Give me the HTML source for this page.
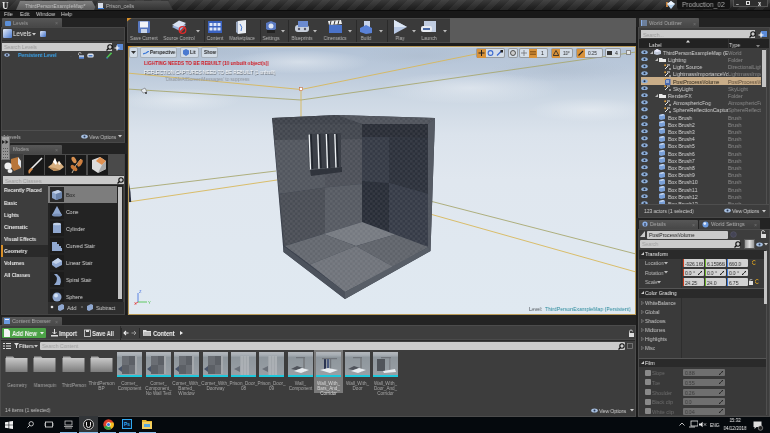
<!DOCTYPE html>
<html><head><meta charset="utf-8">
<style>
*{margin:0;padding:0;box-sizing:border-box}
html,body{width:770px;height:433px;overflow:hidden;background:#1c1c1c;font-family:"Liberation Sans",sans-serif;color:#cfcfcf}
.a{position:absolute}
.t{position:absolute;white-space:nowrap;-webkit-font-smoothing:antialiased;will-change:transform}
</style></head><body>
<div class="a" style="left:0px;top:0px;width:770px;height:10px;background:linear-gradient(#3a3a3a,#262626 60%,#1c1c1c);"></div>
<div class="a" style="left:0px;top:0px;width:770px;height:10px;background:repeating-linear-gradient(135deg,rgba(255,255,255,.05) 0 6px,rgba(0,0,0,0) 6px 12px);"></div>
<div class="t" style="left:2px;top:0.31px;font-size:10.35px;line-height:11.38px;color:#f2f2f2;font-weight:bold;transform:scaleX(0.87);transform-origin:0 50%;font-family:Liberation Serif;">U</div>
<svg class="a" style="left:16px;top:1px;" width="82" height="9" viewBox="0 0 82 9"><defs><linearGradient id="tg1" x1="0" y1="0" x2="0" y2="1"><stop offset="0" stop-color="#808080"/><stop offset="1" stop-color="#5a5a5a"/></linearGradient></defs><polygon points="0,9 4,0 76,0 81,9" fill="url(#tg1)"/></svg>
<div class="t" style="left:25px;top:2.81px;font-size:5.98px;line-height:6.58px;color:#c4c4c4;transform:scaleX(0.87);transform-origin:0 50%;">ThirdPersonExampleMap*</div>
<svg class="a" style="left:94px;top:1px;" width="80" height="9" viewBox="0 0 80 9"><defs><linearGradient id="tg2" x1="0" y1="0" x2="0" y2="1"><stop offset="0" stop-color="#505050"/><stop offset="1" stop-color="#333"/></linearGradient></defs><polygon points="0,9 4,0 74,0 79,9" fill="url(#tg2)"/></svg>
<div class="a" style="left:98px;top:3px;width:5px;height:5px;background:#d8dde8;"></div>
<div class="a" style="left:98px;top:8px;width:6px;height:1px;background:#3c7cd8;"></div>
<div class="t" style="left:106px;top:2.81px;font-size:5.98px;line-height:6.58px;color:#b4b4b4;transform:scaleX(0.87);transform-origin:0 50%;">Prison_cells</div>
<div class="a" style="left:666px;top:2px;width:2px;height:5px;background:#c08040;"></div>
<svg class="a" style="left:667px;top:1px;" width="8" height="8" viewBox="0 0 8 8"><polygon points="4,0 8,3 4,8 0,3" fill="#b8d4f0"/><polygon points="4,0 8,3 4,4 0,3" fill="#f0f6ff"/></svg>
<div class="a" style="left:677px;top:0px;width:53px;height:9px;background:#141414;border-radius:0 0 2px 2px"></div>
<div class="t" style="left:682px;top:1.43px;font-size:7.59px;line-height:8.35px;color:#a8a8a8;transform:scaleX(0.87);transform-origin:0 50%;">Production_02</div>
<div class="a" style="left:733px;top:0px;width:35px;height:7px;background:#2e2e2e;border:1px solid #555;border-top:0"></div>
<div class="t" style="left:736px;top:1.14px;font-size:5.75px;line-height:6.33px;color:#eee;font-weight:bold;transform:scaleX(0.87);transform-origin:0 50%;">–</div>
<div class="a" style="left:746px;top:1px;width:4px;height:4px;background:transparent;border:1px solid #ddd"></div>
<div class="t" style="left:758px;top:0.62px;font-size:6.32px;line-height:6.96px;color:#eee;font-weight:bold;transform:scaleX(0.87);transform-origin:0 50%;">x</div>
<div class="a" style="left:0px;top:10px;width:770px;height:8px;background:#191919;"></div>
<div class="a" style="left:0px;top:10px;width:770px;height:1px;background:#0c0c0c;"></div>
<div class="t" style="left:4px;top:11.38px;font-size:6.21px;line-height:6.83px;color:#d4d4d4;transform:scaleX(0.87);transform-origin:0 50%;">File</div>
<div class="t" style="left:20px;top:11.38px;font-size:6.21px;line-height:6.83px;color:#d4d4d4;transform:scaleX(0.87);transform-origin:0 50%;">Edit</div>
<div class="t" style="left:36px;top:11.38px;font-size:6.21px;line-height:6.83px;color:#d4d4d4;transform:scaleX(0.87);transform-origin:0 50%;">Window</div>
<div class="t" style="left:61px;top:11.38px;font-size:6.21px;line-height:6.83px;color:#d4d4d4;transform:scaleX(0.87);transform-origin:0 50%;">Help</div>
<div class="a" style="left:0px;top:18px;width:127px;height:9px;background:#232323;"></div>
<div class="a" style="left:2px;top:18px;width:60px;height:9px;background:linear-gradient(#575757,#474747);border-radius:1px 1px 0 0"></div>
<div class="a" style="left:5px;top:21px;width:6px;height:5px;background:#5b8fd8;border-radius:1px"></div>
<div class="t" style="left:13px;top:19.51px;font-size:5.98px;line-height:6.58px;color:#9c9c9c;transform:scaleX(0.87);transform-origin:0 50%;">Levels</div>
<div class="t" style="left:55px;top:19.64px;font-size:5.75px;line-height:6.33px;color:#777;transform:scaleX(0.87);transform-origin:0 50%;">×</div>
<div class="a" style="left:1px;top:27px;width:124px;height:116px;background:#3d3d3d;border:1px solid #484848"></div>
<div class="a" style="left:2px;top:28px;width:122px;height:12px;background:#393939;"></div>
<div class="a" style="left:2px;top:40px;width:122px;height:1px;background:#2c2c2c;"></div>
<div class="a" style="left:3px;top:29px;width:9px;height:9px;background:linear-gradient(135deg,#e8eef8,#4a7ad0);border-radius:1px"></div>
<div class="t" style="left:13px;top:30.42px;font-size:7.24px;line-height:7.97px;color:#ececec;transform:scaleX(0.87);transform-origin:0 50%;">Levels</div>
<svg class="a" style="left:32px;top:33px;" width="4" height="3" viewBox="0 0 4 3"><polygon points="0,0 4,0 2,2.5" fill="#ccc"/></svg>
<div class="a" style="left:40px;top:31px;width:6px;height:6px;background:linear-gradient(135deg,#dfe8f8,#3f6fc8);border-radius:1px"></div>
<div class="a" style="left:2px;top:43px;width:110px;height:8px;background:#cbcbcb;"></div>
<div class="t" style="left:4px;top:44.11px;font-size:5.98px;line-height:6.58px;color:#999;transform:scaleX(0.87);transform-origin:0 50%;">Search Levels</div>
<svg class="a" style="left:106px;top:44px;" width="7" height="7" viewBox="0 0 7 7"><circle cx="4" cy="3" r="2.2" stroke="#111" stroke-width="1.1" fill="none"/><line x1="2.5" y1="4.5" x2="0.5" y2="6.5" stroke="#111" stroke-width="1.2"/></svg>
<svg class="a" style="left:114px;top:43px;" width="9" height="8" viewBox="0 0 9 8"><rect x="3" y="1" width="6" height="6" fill="#5a8ad8"/><path d="M0.5 5h5M3 2.5v5" stroke="#fff" stroke-width="1.2"/></svg>
<svg class="a" style="left:4px;top:53px;" width="6" height="4" viewBox="0 0 6 4"><ellipse cx="3" cy="2" rx="2.8" ry="1.7" fill="#9ab6dc"/><circle cx="3" cy="2" r="0.9" fill="#223"/></svg>
<div class="t" style="left:18px;top:52.45px;font-size:6.09px;line-height:6.70px;color:#3ba0e6;font-weight:bold;transform:scaleX(0.87);transform-origin:0 50%;letter-spacing:-0.15px;">Persistent Level</div>
<div class="t" style="left:70px;top:53.14px;font-size:5.75px;line-height:6.33px;color:#666;transform:scaleX(0.87);transform-origin:0 50%;">·</div>
<svg class="a" style="left:77px;top:52px;" width="7" height="7" viewBox="0 0 7 7"><path d="M1.5 3V1.8a1.3 1.3 0 0 1 2.6 0" stroke="#ccc" stroke-width=".8" fill="none"/><rect x="2" y="3.5" width="5" height="3.2" fill="#5a8ad8"/><rect x="2" y="3.5" width="5" height="1.2" fill="#ddd"/></svg>
<svg class="a" style="left:87px;top:53px;" width="7" height="5" viewBox="0 0 7 5"><rect x="0.3" y="0.5" width="6.4" height="4" rx="1.5" fill="#dfe6f0"/><rect x="1.5" y="2" width="4" height="1.5" fill="#4a78c0"/></svg>
<svg class="a" style="left:106px;top:52px;" width="6" height="7" viewBox="0 0 6 7"><line x1="0.8" y1="6" x2="5.5" y2="0.8" stroke="#4fc04f" stroke-width="1.6"/><circle cx="1" cy="6" r=".8" fill="#3a6ad0"/></svg>
<div class="a" style="left:2px;top:130px;width:122px;height:1px;background:#4e4e4e;"></div>
<div class="t" style="left:3px;top:134.01px;font-size:5.98px;line-height:6.58px;color:#bdbdbd;transform:scaleX(0.87);transform-origin:0 50%;">1 levels</div>
<svg class="a" style="left:81px;top:134px;" width="7" height="5" viewBox="0 0 7 5"><ellipse cx="3.5" cy="2.5" rx="3.3" ry="2" fill="#a8c0e0"/><circle cx="3.5" cy="2.5" r="1" fill="#2a3a5a"/></svg>
<div class="t" style="left:89px;top:134.20px;font-size:5.63px;line-height:6.20px;color:#bdbdbd;transform:scaleX(0.87);transform-origin:0 50%;letter-spacing:-0.15px;">View Options</div>
<svg class="a" style="left:118px;top:135px;" width="4" height="3" viewBox="0 0 4 3"><polygon points="0,0 4,0 2,2.5" fill="#ccc"/></svg>
<div class="a" style="left:0px;top:143px;width:127px;height:11px;background:#232323;"></div>
<div class="a" style="left:10px;top:145px;width:52px;height:9px;background:linear-gradient(#575757,#474747);border-radius:1px 1px 0 0"></div>
<div class="t" style="left:13px;top:145.91px;font-size:5.98px;line-height:6.58px;color:#a8a8a8;transform:scaleX(0.87);transform-origin:0 50%;">Modes</div>
<div class="t" style="left:55px;top:147.14px;font-size:5.75px;line-height:6.33px;color:#777;transform:scaleX(0.87);transform-origin:0 50%;">×</div>
<div class="a" style="left:1px;top:154px;width:124px;height:161px;background:#3d3d3d;border:1px solid #454545"></div>
<div class="a" style="left:2px;top:154px;width:122px;height:21px;background:#4a4a4a;"></div>
<div class="a" style="left:2px;top:154px;width:21px;height:21px;background:#3d3d3d;"></div>
<div class="a" style="left:24px;top:155px;width:20px;height:20px;background:#191919;"></div>
<div class="a" style="left:45px;top:155px;width:20px;height:20px;background:#191919;"></div>
<div class="a" style="left:66px;top:155px;width:20px;height:20px;background:#191919;"></div>
<div class="a" style="left:88px;top:155px;width:20px;height:20px;background:#191919;"></div>
<svg class="a" style="left:3px;top:156px;" width="19" height="18" viewBox="0 0 19 18"><polygon points="8,3 15,1 18,5 18,12 11,15 8,11" fill="#b8763a"/><polygon points="15,1 18,5 18,12 15,8" fill="#e0e4ea"/><circle cx="5" cy="10" r="3.6" fill="#f0f0f0"/><ellipse cx="7" cy="15" rx="2.5" ry="2" fill="#eee"/></svg>
<svg class="a" style="left:26px;top:157px;" width="17" height="17" viewBox="0 0 17 17"><line x1="16" y1="1" x2="5" y2="12" stroke="#f0f0f0" stroke-width="1.6"/><path d="M5 11 Q1 13 3 17 Q6 13 7 12Z" fill="#d89050"/></svg>
<svg class="a" style="left:47px;top:157px;" width="18" height="15" viewBox="0 0 18 15"><polygon points="1,10 5,7 8,1 10,6 12,4 17,10 13,13 7,14" fill="#d8b080"/><polygon points="8,1 10,6 9,8 6,5" fill="#fff"/><polygon points="12,4 14,7 12,8 11,6" fill="#f4f0ea"/><polygon points="1,10 7,14 13,13 8,11" fill="#b88a58"/></svg>
<svg class="a" style="left:69px;top:156px;" width="15" height="18" viewBox="0 0 15 18"><path d="M3 17 Q6 9 12 3" stroke="#f0e0c0" stroke-width=".8" fill="none"/><ellipse cx="5" cy="4" rx="2" ry="3.5" fill="#d89050" transform="rotate(-30 5 4)"/><ellipse cx="11" cy="7" rx="2" ry="4" fill="#d08040" transform="rotate(30 11 7)"/><ellipse cx="5" cy="12" rx="2" ry="4" fill="#c87838" transform="rotate(-50 5 12)"/></svg>
<svg class="a" style="left:90px;top:156px;" width="17" height="18" viewBox="0 0 17 18"><polygon points="2,4 10,1 16,5 16,13 8,17 2,13" fill="#dcdcdc"/><polygon points="10,1 16,5 12,9 6,5" fill="#e09050"/><polygon points="8,17 16,13 16,5 12,9" fill="#a8a8a8"/></svg>
<div class="a" style="left:3px;top:176px;width:121px;height:8px;background:#c9c9c9;"></div>
<div class="t" style="left:5px;top:177.71px;font-size:5.98px;line-height:6.58px;color:#9a9a9a;transform:scaleX(0.87);transform-origin:0 50%;">Search Classes</div>
<svg class="a" style="left:117px;top:177px;" width="7" height="7" viewBox="0 0 7 7"><circle cx="4" cy="3" r="2.2" stroke="#111" stroke-width="1.1" fill="none"/><line x1="2.5" y1="4.5" x2="0.5" y2="6.5" stroke="#111" stroke-width="1.2"/></svg>
<div class="a" style="left:2px;top:185px;width:46px;height:129px;background:#3d3d3d;"></div>
<div class="a" style="left:2px;top:245px;width:46px;height:12px;background:#2a2a2a;"></div>
<div class="a" style="left:1px;top:245px;width:1.5px;height:12px;background:#d8902a;"></div>
<div class="t" style="left:4px;top:187.37px;font-size:5.86px;line-height:6.45px;color:#e6e6e6;font-weight:bold;transform:scaleX(0.87);transform-origin:0 50%;letter-spacing:-0.1px;">Recently Placed</div>
<div class="t" style="left:4px;top:199.57px;font-size:5.86px;line-height:6.45px;color:#e6e6e6;font-weight:bold;transform:scaleX(0.87);transform-origin:0 50%;letter-spacing:-0.1px;">Basic</div>
<div class="t" style="left:4px;top:211.57px;font-size:5.86px;line-height:6.45px;color:#e6e6e6;font-weight:bold;transform:scaleX(0.87);transform-origin:0 50%;letter-spacing:-0.1px;">Lights</div>
<div class="t" style="left:4px;top:223.57px;font-size:5.86px;line-height:6.45px;color:#e6e6e6;font-weight:bold;transform:scaleX(0.87);transform-origin:0 50%;letter-spacing:-0.1px;">Cinematic</div>
<div class="t" style="left:4px;top:235.57px;font-size:5.86px;line-height:6.45px;color:#e6e6e6;font-weight:bold;transform:scaleX(0.87);transform-origin:0 50%;letter-spacing:-0.1px;">Visual Effects</div>
<div class="t" style="left:4px;top:247.77px;font-size:5.86px;line-height:6.45px;color:#e6e6e6;font-weight:bold;transform:scaleX(0.87);transform-origin:0 50%;letter-spacing:-0.1px;">Geometry</div>
<div class="t" style="left:4px;top:259.77px;font-size:5.86px;line-height:6.45px;color:#e6e6e6;font-weight:bold;transform:scaleX(0.87);transform-origin:0 50%;letter-spacing:-0.1px;">Volumes</div>
<div class="t" style="left:4px;top:271.77px;font-size:5.86px;line-height:6.45px;color:#e6e6e6;font-weight:bold;transform:scaleX(0.87);transform-origin:0 50%;letter-spacing:-0.1px;">All Classes</div>
<div class="a" style="left:48px;top:185px;width:75px;height:118px;background:#232323;"></div>
<div class="a" style="left:48px;top:186px;width:69px;height:17px;background:#7d7d7d;"></div>
<div class="a" style="left:50px;top:187px;width:14px;height:15px;background:#2a2a2a;"></div>
<div class="t" style="left:66px;top:192.01px;font-size:5.98px;line-height:6.58px;color:#222;transform:scaleX(0.87);transform-origin:0 50%;">Box</div>
<div class="a" style="left:50px;top:204px;width:14px;height:15px;background:#1c1c1c;"></div>
<div class="t" style="left:66px;top:209.01px;font-size:5.98px;line-height:6.58px;color:#d8d8d8;transform:scaleX(0.87);transform-origin:0 50%;">Cone</div>
<div class="a" style="left:50px;top:221px;width:14px;height:15px;background:#1c1c1c;"></div>
<div class="t" style="left:66px;top:226.01px;font-size:5.98px;line-height:6.58px;color:#d8d8d8;transform:scaleX(0.87);transform-origin:0 50%;">Cylinder</div>
<div class="a" style="left:50px;top:238px;width:14px;height:15px;background:#1c1c1c;"></div>
<div class="t" style="left:66px;top:243.01px;font-size:5.98px;line-height:6.58px;color:#d8d8d8;transform:scaleX(0.87);transform-origin:0 50%;">Curved Stair</div>
<div class="a" style="left:50px;top:255px;width:14px;height:15px;background:#1c1c1c;"></div>
<div class="t" style="left:66px;top:260.01px;font-size:5.98px;line-height:6.58px;color:#d8d8d8;transform:scaleX(0.87);transform-origin:0 50%;">Linear Stair</div>
<div class="a" style="left:50px;top:272px;width:14px;height:15px;background:#1c1c1c;"></div>
<div class="t" style="left:66px;top:277.01px;font-size:5.98px;line-height:6.58px;color:#d8d8d8;transform:scaleX(0.87);transform-origin:0 50%;">Spiral Stair</div>
<div class="a" style="left:50px;top:289px;width:14px;height:15px;background:#1c1c1c;"></div>
<div class="t" style="left:66px;top:294.01px;font-size:5.98px;line-height:6.58px;color:#d8d8d8;transform:scaleX(0.87);transform-origin:0 50%;">Sphere</div>
<svg class="a" style="left:51px;top:188px;" width="12" height="12" viewBox="0 0 12 12"><polygon points="1,4 7,2 11,4 11,10 5,12 1,10" fill="#8aa2c8"/><polygon points="7,2 11,4 5,6 1,4" fill="#c0d0e8"/><polygon points="5,6 11,4 11,10 5,12" fill="#6a82a8"/></svg>
<svg class="a" style="left:51px;top:205px;" width="12" height="12" viewBox="0 0 12 12"><polygon points="6,1 11,10 1,10" fill="#90a8d0"/><ellipse cx="6" cy="10" rx="5" ry="1.5" fill="#7890b8"/></svg>
<svg class="a" style="left:51px;top:222px;" width="12" height="12" viewBox="0 0 12 12"><rect x="2" y="2" width="8" height="9" fill="#90a8d0"/><ellipse cx="6" cy="2" rx="4" ry="1.3" fill="#c0d0e8"/></svg>
<svg class="a" style="left:51px;top:239px;" width="12" height="12" viewBox="0 0 12 12"><path d="M1 3h5v2h2v2h2v2h1v3H1z" fill="#90a8d0"/></svg>
<svg class="a" style="left:51px;top:256px;" width="12" height="12" viewBox="0 0 12 12"><path d="M1 6l6-4 4 3v4l-6 3-4-3z" fill="#90a8d0"/><path d="M1 6l6-4 4 3-6 3z" fill="#c0d0e8"/></svg>
<svg class="a" style="left:51px;top:273px;" width="12" height="12" viewBox="0 0 12 12"><path d="M3 1q6 5 0 11h6q3-6-3-11z" fill="#90a8d0"/></svg>
<svg class="a" style="left:51px;top:290px;" width="12" height="12" viewBox="0 0 12 12"><circle cx="6" cy="7" r="4.5" fill="#90a8d0"/><circle cx="5" cy="5.5" r="2" fill="#d0e0f4"/></svg>
<div class="a" style="left:118px;top:186px;width:4px;height:113px;background:#2a2a2a;"></div>
<div class="a" style="left:118px;top:187px;width:4px;height:112px;background:#c4c4c4;"></div>
<div class="a" style="left:48px;top:302px;width:76px;height:12px;background:#2e2e2e;"></div>
<svg class="a" style="left:50px;top:305px;" width="4" height="4" viewBox="0 0 4 4"><circle cx="2" cy="2" r="1.3" fill="#ddd"/></svg>
<svg class="a" style="left:57px;top:303px;" width="8" height="8" viewBox="0 0 8 8"><polygon points="1,3 5,1 7,2 7,6 3,8 1,7" fill="#90a8d0"/></svg>
<div class="t" style="left:67px;top:305.21px;font-size:5.98px;line-height:6.58px;color:#cfcfcf;transform:scaleX(0.87);transform-origin:0 50%;">Add</div>
<svg class="a" style="left:80px;top:305px;" width="4" height="4" viewBox="0 0 4 4"><circle cx="2" cy="2" r="1.1" fill="#666"/></svg>
<svg class="a" style="left:86px;top:303px;" width="8" height="8" viewBox="0 0 8 8"><polygon points="1,3 5,1 7,2 7,6 3,8 1,7" fill="#90a8d0"/></svg>
<div class="t" style="left:96px;top:305.21px;font-size:5.98px;line-height:6.58px;color:#cfcfcf;transform:scaleX(0.87);transform-origin:0 50%;">Subtract</div>
<div class="a" style="left:1px;top:136px;width:9px;height:24px;background:rgba(175,175,175,.8);border:1px solid rgba(90,90,90,.6)"></div>
<svg class="a" style="left:2px;top:140px;" width="7" height="4" viewBox="0 0 7 4"><polygon points="0,0 3,2 0,4" fill="#222"/><polygon points="3.5,0 6.5,2 3.5,4" fill="#222"/></svg>
<div class="a" style="left:3px;top:148px;width:1px;height:1px;background:rgba(60,60,60,.7);"></div>
<div class="a" style="left:5px;top:148px;width:1px;height:1px;background:rgba(60,60,60,.7);"></div>
<div class="a" style="left:7px;top:148px;width:1px;height:1px;background:rgba(60,60,60,.7);"></div>
<div class="a" style="left:3px;top:151px;width:1px;height:1px;background:rgba(60,60,60,.7);"></div>
<div class="a" style="left:5px;top:151px;width:1px;height:1px;background:rgba(60,60,60,.7);"></div>
<div class="a" style="left:7px;top:151px;width:1px;height:1px;background:rgba(60,60,60,.7);"></div>
<div class="a" style="left:3px;top:154px;width:1px;height:1px;background:rgba(60,60,60,.7);"></div>
<div class="a" style="left:5px;top:154px;width:1px;height:1px;background:rgba(60,60,60,.7);"></div>
<div class="a" style="left:7px;top:154px;width:1px;height:1px;background:rgba(60,60,60,.7);"></div>
<div class="a" style="left:3px;top:157px;width:1px;height:1px;background:rgba(60,60,60,.7);"></div>
<div class="a" style="left:5px;top:157px;width:1px;height:1px;background:rgba(60,60,60,.7);"></div>
<div class="a" style="left:7px;top:157px;width:1px;height:1px;background:rgba(60,60,60,.7);"></div>
<div class="a" style="left:126px;top:18px;width:512px;height:9px;background:#232323;"></div>
<div class="a" style="left:127px;top:18px;width:509px;height:25px;background:#5b5b5b;"></div>
<div class="a" style="left:127px;top:18px;width:323px;height:25px;background:#3a3a3a;border:1px solid #4a4a4a;border-right:0"></div>
<svg class="a" style="left:127px;top:18px;" width="5" height="4" viewBox="0 0 5 4"><polygon points="0,0 4.5,0 0,3.5" fill="#d8902a"/></svg>
<svg class="a" style="left:136px;top:20px;" width="16" height="14" viewBox="0 0 16 14"><rect x="2" y="1" width="12" height="12" rx="1" fill="#5878c0"/><rect x="4" y="1.5" width="8" height="6" fill="#f2f4f8"/><rect x="5" y="9" width="6" height="4" fill="#c8d4e8"/></svg>
<div class="t" style="left:84px;width:120px;text-align:center;top:36.13px;font-size:5.40px;line-height:5.95px;color:#b8b8b8;transform:scaleX(0.87);transform-origin:50% 50%;">Save Current</div>
<svg class="a" style="left:171px;top:20px;" width="16" height="14" viewBox="0 0 16 14"><polygon points="1,7 8,2 15,5 9,11" fill="#9ab2dc"/><polygon points="1,5 8,0.5 15,3 9,8" fill="#d8e2f2"/><circle cx="11.5" cy="10" r="3.3" fill="none" stroke="#e02a2a" stroke-width="1.3"/><line x1="9.3" y1="12.2" x2="13.7" y2="7.8" stroke="#e02a2a" stroke-width="1.3"/></svg>
<div class="t" style="left:119px;width:120px;text-align:center;top:36.13px;font-size:5.40px;line-height:5.95px;color:#b8b8b8;transform:scaleX(0.87);transform-origin:50% 50%;">Source Control</div>
<svg class="a" style="left:196px;top:30px;" width="4" height="3" viewBox="0 0 4 3"><polygon points="0,0 4,0 2,2.5" fill="#bbb"/></svg>
<div class="a" style="left:204px;top:20px;width:1px;height:22px;background:#2a2a2a;"></div>
<svg class="a" style="left:207px;top:20px;" width="16" height="14" viewBox="0 0 16 14"><rect x="1" y="1" width="14" height="12" fill="#3a62c0"/><g fill="#dfe8f8"><rect x="2.5" y="3" width="3" height="3"/><rect x="6.5" y="3" width="3" height="3"/><rect x="10.5" y="3" width="3" height="3"/><rect x="2.5" y="7.5" width="3" height="3"/><rect x="6.5" y="7.5" width="3" height="3"/><rect x="10.5" y="7.5" width="3" height="3"/></g></svg>
<div class="t" style="left:155px;width:120px;text-align:center;top:36.13px;font-size:5.40px;line-height:5.95px;color:#b8b8b8;transform:scaleX(0.87);transform-origin:50% 50%;">Content</div>
<svg class="a" style="left:234px;top:20px;" width="16" height="14" viewBox="0 0 16 14"><polygon points="4,1 12,0 12,13 4,14" fill="#e8ecf2"/><polygon points="2,2 4,1 4,14 2,12" fill="#9aa8c0"/><path d="M6 4q3 3 1 7" stroke="#4a7ad0" stroke-width="1" fill="none"/></svg>
<div class="t" style="left:182px;width:120px;text-align:center;top:36.13px;font-size:5.40px;line-height:5.95px;color:#b8b8b8;transform:scaleX(0.87);transform-origin:50% 50%;">Marketplace</div>
<div class="a" style="left:260px;top:20px;width:1px;height:22px;background:#2a2a2a;"></div>
<svg class="a" style="left:263px;top:20px;" width="16" height="14" viewBox="0 0 16 14"><polygon points="3,3 8,1 13,3 13,9 8,12 3,9" fill="#5878c0"/><circle cx="8" cy="6" r="2.5" fill="#dfe6f2"/><rect x="4" y="10" width="8" height="3" fill="#222"/></svg>
<div class="t" style="left:211px;width:120px;text-align:center;top:36.13px;font-size:5.40px;line-height:5.95px;color:#b8b8b8;transform:scaleX(0.87);transform-origin:50% 50%;">Settings</div>
<svg class="a" style="left:281px;top:30px;" width="4" height="3" viewBox="0 0 4 3"><polygon points="0,0 4,0 2,2.5" fill="#bbb"/></svg>
<div class="a" style="left:288px;top:20px;width:1px;height:22px;background:#2a2a2a;"></div>
<svg class="a" style="left:294px;top:20px;" width="16" height="14" viewBox="0 0 16 14"><rect x="1" y="5" width="14" height="7" rx="3" fill="#c8d0dc"/><rect x="4" y="1" width="10" height="6" fill="#6a8ad0"/><circle cx="5" cy="9" r="1.2" fill="#556"/><circle cx="11" cy="9" r="1.2" fill="#556"/></svg>
<div class="t" style="left:242px;width:120px;text-align:center;top:36.13px;font-size:5.40px;line-height:5.95px;color:#b8b8b8;transform:scaleX(0.87);transform-origin:50% 50%;">Blueprints</div>
<svg class="a" style="left:313px;top:30px;" width="4" height="3" viewBox="0 0 4 3"><polygon points="0,0 4,0 2,2.5" fill="#bbb"/></svg>
<svg class="a" style="left:327px;top:20px;" width="16" height="14" viewBox="0 0 16 14"><rect x="2" y="5" width="13" height="8" fill="#4a72c8"/><polygon points="1,1 14,0 15,4 2,5" fill="#f0f0f0"/><path d="M4 1l-1 4M8 .7l-1 4M12 .3l-1 4" stroke="#333" stroke-width="1"/></svg>
<div class="t" style="left:275px;width:120px;text-align:center;top:36.13px;font-size:5.40px;line-height:5.95px;color:#b8b8b8;transform:scaleX(0.87);transform-origin:50% 50%;">Cinematics</div>
<svg class="a" style="left:348px;top:30px;" width="4" height="3" viewBox="0 0 4 3"><polygon points="0,0 4,0 2,2.5" fill="#bbb"/></svg>
<div class="a" style="left:356px;top:20px;width:1px;height:22px;background:#2a2a2a;"></div>
<svg class="a" style="left:358px;top:20px;" width="16" height="14" viewBox="0 0 16 14"><rect x="6" y="1" width="6" height="8" fill="#c8d4ec"/><polygon points="2,8 8,5 14,8 14,13 8,14 2,12" fill="#5a82d8"/></svg>
<div class="t" style="left:306px;width:120px;text-align:center;top:36.13px;font-size:5.40px;line-height:5.95px;color:#b8b8b8;transform:scaleX(0.87);transform-origin:50% 50%;">Build</div>
<svg class="a" style="left:379px;top:30px;" width="4" height="3" viewBox="0 0 4 3"><polygon points="0,0 4,0 2,2.5" fill="#bbb"/></svg>
<div class="a" style="left:387px;top:20px;width:1px;height:22px;background:#2a2a2a;"></div>
<svg class="a" style="left:392px;top:20px;" width="16" height="14" viewBox="0 0 16 14"><polygon points="2,0 15,7 2,14" fill="#b8c8e4"/><polygon points="2,0 15,7 2,7" fill="#dce6f4"/></svg>
<div class="t" style="left:340px;width:120px;text-align:center;top:36.13px;font-size:5.40px;line-height:5.95px;color:#b8b8b8;transform:scaleX(0.87);transform-origin:50% 50%;">Play</div>
<svg class="a" style="left:412px;top:30px;" width="4" height="3" viewBox="0 0 4 3"><polygon points="0,0 4,0 2,2.5" fill="#bbb"/></svg>
<svg class="a" style="left:421px;top:20px;" width="16" height="14" viewBox="0 0 16 14"><rect x="3" y="1" width="12" height="11" fill="#c0cce0"/><rect x="0" y="6" width="11" height="6" rx="2" fill="#e8ecf2"/><rect x="2" y="8" width="7" height="2" fill="#4a6aa8"/></svg>
<div class="t" style="left:369px;width:120px;text-align:center;top:36.13px;font-size:5.40px;line-height:5.95px;color:#b8b8b8;transform:scaleX(0.87);transform-origin:50% 50%;">Launch</div>
<svg class="a" style="left:443px;top:30px;" width="4" height="3" viewBox="0 0 4 3"><polygon points="0,0 4,0 2,2.5" fill="#bbb"/></svg>
<svg class="a" style="left:127px;top:46px" width="509" height="269" viewBox="127 46 509 269">
<defs>
<linearGradient id="sky" x1="0" y1="46" x2="0" y2="315" gradientUnits="userSpaceOnUse"><stop offset="0" stop-color="#b2c2d6"/><stop offset="0.1" stop-color="#bccadb"/><stop offset="0.2" stop-color="#cdd8e4"/><stop offset="0.33" stop-color="#dbe3ec"/><stop offset="0.5" stop-color="#e0e7ef"/><stop offset="1" stop-color="#e0e9f1"/></linearGradient>
<pattern id="chk" width="5" height="5" patternUnits="userSpaceOnUse"><rect width="2.5" height="2.5" fill="#fff" opacity=".06"/><rect x="2.5" y="2.5" width="2.5" height="2.5" fill="#fff" opacity=".06"/></pattern>
<radialGradient id="cl1" cx=".5" cy=".5" r=".5"><stop offset="0" stop-color="#eef2f6" stop-opacity=".55"/><stop offset="1" stop-color="#eef2f6" stop-opacity="0"/></radialGradient>
<radialGradient id="cl2" cx=".5" cy=".5" r=".5"><stop offset="0" stop-color="#a8b6c6" stop-opacity=".35"/><stop offset="1" stop-color="#a8b6c6" stop-opacity="0"/></radialGradient>
</defs>
<rect x="127" y="46" width="509" height="269" fill="url(#sky)"/>
<ellipse cx="200" cy="52" rx="70" ry="9" fill="url(#cl2)"/>
<ellipse cx="420" cy="56" rx="60" ry="10" fill="url(#cl2)"/>
<ellipse cx="560" cy="70" rx="70" ry="12" fill="url(#cl2)"/>
<ellipse cx="300" cy="62" rx="70" ry="12" fill="url(#cl1)"/>
<ellipse cx="470" cy="88" rx="90" ry="16" fill="url(#cl1)"/>
<ellipse cx="180" cy="100" rx="60" ry="12" fill="url(#cl1)"/>
<ellipse cx="590" cy="110" rx="60" ry="12" fill="url(#cl1)"/>
<g fill="none" stroke-width="0.9">
<polyline points="127,73 301,89.5 476,54" stroke="#d8b85a"/>
<polyline points="127,89 301,100 636,52" stroke="#a8a870"/>
<line x1="301" y1="89" x2="301" y2="117" stroke="#d8b85a"/>
<line x1="128" y1="189" x2="276" y2="171" stroke="#a8a870"/>
<line x1="128" y1="202" x2="277" y2="180" stroke="#d8b85a"/>
<line x1="430" y1="201" x2="636" y2="254" stroke="#a8a870"/>
<line x1="430" y1="214" x2="636" y2="272" stroke="#d8b85a"/>
</g>
<rect x="299.5" y="87.5" width="3" height="3" fill="#fff" stroke="#c86a3a" stroke-width=".6"/>
<polygon points="272,118 337,115 435,118 430.5,251 345,299 283.5,252" fill="#3a404c"/>
<polygon points="273,124 325,124 325,187.5 279,194" fill="#52565e"/>
<polygon points="325,124 362,124 362,184 325,187.5" fill="#4c5058"/>
<polygon points="279,194 325,187.5 325,233.5 284,246" fill="#494d55"/>
<polygon points="325,187.5 362,184 362,222 325,233.5" fill="#565a62"/>
<polygon points="273,124 362,124 362,139 274.4,140" fill="#42464e"/>
<polygon points="362,124 428,124 428,138 362,137" fill="#292d36"/>
<polygon points="362,137 389,137.5 389,183 362,181" fill="#353a45"/>
<polygon points="389,137.5 428,138 428,194 389,183" fill="#2c313b"/>
<polygon points="362,181 389,183 389,232 362,222" fill="#282d37"/>
<polygon points="389,183 428,194 428,247 389,232" fill="#363b47"/>
<polygon points="273,124 362,124 362,222 285,246" fill="url(#chk)"/>
<polygon points="362,124 428,124 428,247 362,222" fill="url(#chk)"/>
<polygon points="272,118 337,115 362,124 273,124" fill="#3e424a"/>
<polygon points="337,115 435,118 428,124 362,124" fill="#4f535b"/>
<polygon points="272,118 337,115 435,118 428,124 362,124 273,124" fill="url(#chk)"/>
<polygon points="428,124 435,118 430.5,251 428,247" fill="#565b64"/>
<polygon points="362,222 395,234.5 356,246 323.5,234" fill="#767a81"/>
<polygon points="323.5,234 356,246 310,264.5 285,246" fill="#63676e"/>
<polygon points="395,234.5 428.5,247 393.5,267 356,246" fill="#5f636a"/>
<polygon points="356,246 393.5,267 345,292 310,264.5" fill="#6f737a"/>
<polygon points="285,246 362,222 428.5,247 345,292" fill="url(#chk)"/>
<polygon points="283.5,246 345,292 345,299 283.5,252" fill="#4c525c"/>
<polygon points="345,292 428.5,247 430.5,251 345,299" fill="#585e67"/>
<polygon points="308,134 341,133 341,167 309,169" fill="#3c4048"/>
<g stroke="#22262e" stroke-width="1.6">
<line x1="311" y1="134" x2="312.5" y2="169"/><line x1="319.5" y1="134" x2="321" y2="168"/><line x1="328" y1="134" x2="329.5" y2="168"/><line x1="336.5" y1="134" x2="338" y2="167"/>
</g>
<g stroke="#f0f3f6" stroke-width="1.3">
<line x1="309.2" y1="134.5" x2="310.5" y2="169.5"/><line x1="317.8" y1="134.2" x2="319" y2="168.8"/><line x1="326.3" y1="134" x2="327.5" y2="168.4"/><line x1="334.8" y1="134" x2="336" y2="168"/>
</g>
<polygon points="310,170 342,167 342,172 311,176" fill="#30343c"/>
<polygon points="128.5,180 130.5,192 131.2,202 128.5,202" fill="#2c3242"/>
<g transform="translate(144,91)"><polygon points="-3,-1 1,-3 3,1 -1,2" fill="#e8ecf0" stroke="#555" stroke-width=".5"/><circle cx="2" cy="2" r="1" fill="#333"/></g>
<line x1="138" y1="302" x2="138" y2="293" stroke="#3a6ae0" stroke-width=".8"/>
<line x1="138" y1="302" x2="147" y2="302" stroke="#40c040" stroke-width=".8"/>
<line x1="138" y1="302" x2="135" y2="304" stroke="#e03030" stroke-width=".8"/>
</svg>
<div class="a" style="left:127px;top:46px;width:1px;height:269px;background:#2a2a2a;"></div>
<div class="a" style="left:128px;top:46px;width:508px;height:269px;background:transparent;border:1px solid #b89a58"></div>
<svg class="a" style="left:128px;top:46px;" width="5" height="4" viewBox="0 0 5 4"><polygon points="0,0 4,0 0,3.5" fill="#d8902a"/></svg>
<div class="a" style="left:129px;top:47px;width:506px;height:1px;background:rgba(255,255,255,.25);"></div>
<div class="t" style="left:139px;top:289.52px;font-size:4.14px;line-height:4.55px;color:#3a6ae0;transform:scaleX(0.87);transform-origin:0 50%;">Z</div>
<div class="t" style="left:148px;top:300.52px;font-size:4.14px;line-height:4.55px;color:#40c040;transform:scaleX(0.87);transform-origin:0 50%;">Y</div>
<div class="t" style="left:134px;top:302.15px;font-size:3.91px;line-height:4.30px;color:#e03030;transform:scaleX(0.87);transform-origin:0 50%;">X</div>
<div class="a" style="left:129px;top:47px;width:9px;height:11px;background:rgba(220,228,236,.75);border:1px solid rgba(120,130,140,.5);border-radius:2px;"></div>
<svg class="a" style="left:131px;top:51px;" width="5" height="4" viewBox="0 0 5 4"><polygon points="0,0 5,0 2.5,3" fill="#333"/></svg>
<div class="a" style="left:140px;top:47px;width:37px;height:11px;background:rgba(220,228,236,.75);border:1px solid rgba(120,130,140,.5);border-radius:2px;"></div>
<svg class="a" style="left:143px;top:51px;" width="6" height="4" viewBox="0 0 6 4"><path d="M0 3L3 2 6 0" stroke="#3a78d8" stroke-width="1.3" fill="none"/></svg>
<div class="t" style="left:149.5px;top:50.25px;font-size:5.17px;line-height:5.69px;color:#222;font-weight:bold;transform:scaleX(0.87);transform-origin:0 50%;">Perspective</div>
<div class="a" style="left:180px;top:47px;width:19px;height:11px;background:rgba(220,228,236,.75);border:1px solid rgba(120,130,140,.5);border-radius:2px;"></div>
<svg class="a" style="left:183px;top:49px;" width="6" height="7" viewBox="0 0 6 7"><polygon points="3,0 6,1.5 6,5 3,7 0,5 0,1.5" fill="#4a7ad0"/></svg>
<div class="t" style="left:190px;top:50.19px;font-size:5.29px;line-height:5.82px;color:#222;font-weight:bold;transform:scaleX(0.87);transform-origin:0 50%;">Lit</div>
<div class="a" style="left:201px;top:47px;width:17px;height:11px;background:rgba(220,228,236,.75);border:1px solid rgba(120,130,140,.5);border-radius:2px;"></div>
<div class="t" style="left:203.5px;top:50.25px;font-size:5.17px;line-height:5.69px;color:#222;font-weight:bold;transform:scaleX(0.87);transform-origin:0 50%;">Show</div>
<div class="t" style="left:144px;top:61.31px;font-size:5.43px;line-height:5.97px;color:#d01a22;font-weight:bold;transform:scaleX(0.87);transform-origin:0 50%;">LIGHTING NEEDS TO BE REBUILT (10 unbuilt object(s))</div>
<div class="t" style="left:144px;top:69.08px;font-size:5.50px;line-height:6.05px;color:#f8f8f8;transform:scaleX(0.87);transform-origin:0 50%;text-shadow:0.5px 0.5px 0 rgba(20,20,20,.55);">REFLECTION CAPTURES NEED TO BE REBUILT (1 unbuilt)</div>
<div class="t" style="left:165px;top:77.13px;font-size:5.40px;line-height:5.95px;color:#8e949c;transform:scaleX(0.87);transform-origin:0 50%;">'DisableAllScreenMessages' to suppress</div>
<div class="t" style="left:528.5px;top:306.04px;font-size:5.75px;line-height:6.33px;color:#4e545a;transform:scaleX(0.87);transform-origin:0 50%;">Level:</div>
<div class="t" style="left:545px;top:305.94px;font-size:5.93px;line-height:6.53px;color:#2a8a9c;transform:scaleX(0.87);transform-origin:0 50%;">ThirdPersonExampleMap (Persistent)</div>
<div class="a" style="left:476px;top:47.5px;width:29px;height:10.5px;background:rgba(220,228,236,.8);border:1px solid rgba(110,110,110,.6);border-radius:2px"></div>
<div class="a" style="left:477px;top:48.5px;width:9px;height:9px;background:#d8923a;"></div>
<svg class="a" style="left:478px;top:50px;" width="7" height="6" viewBox="0 0 7 6"><path d="M3.5 0v6M0.5 3h6" stroke="#222" stroke-width="1"/></svg>
<svg class="a" style="left:487px;top:50px;" width="7" height="6" viewBox="0 0 7 6"><circle cx="3.5" cy="3" r="2.4" stroke="#3a6ad0" stroke-width="1.1" fill="none"/></svg>
<svg class="a" style="left:496px;top:50px;" width="7" height="6" viewBox="0 0 7 6"><path d="M1 5.5L6 .5" stroke="#3a6ad0" stroke-width="1.2"/><rect x="4.5" y="0" width="2.5" height="2.5" fill="#222"/></svg>
<div class="a" style="left:508px;top:47.5px;width:10px;height:10.5px;background:rgba(220,228,236,.8);border:1px solid rgba(110,110,110,.6);border-radius:2px"></div>
<svg class="a" style="left:510px;top:50px;" width="6" height="6" viewBox="0 0 6 6"><circle cx="3" cy="3" r="2.5" stroke="#333" stroke-width=".8" fill="#ccc"/></svg>
<div class="a" style="left:519px;top:47.5px;width:29px;height:10.5px;background:rgba(220,228,236,.8);border:1px solid rgba(110,110,110,.6);border-radius:2px"></div>
<svg class="a" style="left:521px;top:50px;" width="6" height="6" viewBox="0 0 6 6"><path d="M0 3h6M3 0v6" stroke="#666" stroke-width=".7"/></svg>
<div class="a" style="left:529px;top:48.5px;width:8px;height:9px;background:#d8923a;"></div>
<svg class="a" style="left:530px;top:50px;" width="6" height="6" viewBox="0 0 6 6"><g stroke="#6a3a0a" stroke-width=".6"><path d="M0 1.5h6M0 3h6M0 4.5h6"/></g></svg>
<div class="t" style="left:541px;top:50.95px;font-size:5.17px;line-height:5.69px;color:#222;transform:scaleX(0.87);transform-origin:0 50%;">1</div>
<div class="a" style="left:551px;top:47.5px;width:22px;height:10.5px;background:rgba(220,228,236,.8);border:1px solid rgba(110,110,110,.6);border-radius:2px"></div>
<div class="a" style="left:552px;top:48.5px;width:8px;height:9px;background:#d8923a;"></div>
<svg class="a" style="left:553px;top:50px;" width="6" height="6" viewBox="0 0 6 6"><polygon points="3,0.5 5.8,5.5 0.2,5.5" fill="none" stroke="#222" stroke-width=".8"/></svg>
<div class="t" style="left:563px;top:50.95px;font-size:5.17px;line-height:5.69px;color:#222;transform:scaleX(0.87);transform-origin:0 50%;">10°</div>
<div class="a" style="left:576px;top:47.5px;width:27px;height:10.5px;background:rgba(220,228,236,.8);border:1px solid rgba(110,110,110,.6);border-radius:2px"></div>
<div class="a" style="left:577px;top:48.5px;width:8px;height:9px;background:#d8923a;"></div>
<svg class="a" style="left:578px;top:50px;" width="6" height="6" viewBox="0 0 6 6"><path d="M.5 5.5L5 1" stroke="#222" stroke-width="1.1"/></svg>
<div class="t" style="left:588px;top:50.95px;font-size:5.17px;line-height:5.69px;color:#222;transform:scaleX(0.87);transform-origin:0 50%;">0.25</div>
<div class="a" style="left:605px;top:47.5px;width:16px;height:10.5px;background:rgba(220,228,236,.8);border:1px solid rgba(110,110,110,.6);border-radius:2px"></div>
<svg class="a" style="left:607px;top:50px;" width="6" height="5" viewBox="0 0 6 5"><rect x="0" y="1" width="5" height="4" fill="#333"/></svg>
<div class="t" style="left:615px;top:50.95px;font-size:5.17px;line-height:5.69px;color:#222;transform:scaleX(0.87);transform-origin:0 50%;">4</div>
<div class="a" style="left:626px;top:50px;width:5px;height:5px;background:rgba(240,240,240,.8);border:1px solid #888"></div>
<div class="a" style="left:636px;top:18px;width:134px;height:9px;background:#232323;"></div>
<div class="a" style="left:639px;top:18px;width:60px;height:9px;background:linear-gradient(#575757,#474747);border-radius:1px 1px 0 0"></div>
<svg class="a" style="left:641px;top:20px;" width="6" height="6" viewBox="0 0 6 6"><g fill="#8ab0e8"><rect x="0" y="0" width="1.5" height="6"/><rect x="2" y="0.5" width="4" height="1"/><rect x="2" y="2.5" width="4" height="1"/><rect x="2" y="4.5" width="4" height="1"/></g></svg>
<div class="t" style="left:649px;top:19.51px;font-size:5.98px;line-height:6.58px;color:#a8a8a8;transform:scaleX(0.87);transform-origin:0 50%;">World Outliner</div>
<div class="t" style="left:693px;top:20.64px;font-size:5.75px;line-height:6.33px;color:#777;transform:scaleX(0.87);transform-origin:0 50%;">×</div>
<div class="a" style="left:638px;top:27px;width:132px;height:191px;background:#3d3d3d;border:1px solid #484848"></div>
<div class="a" style="left:641px;top:30px;width:114px;height:8px;background:#cbcbcb;"></div>
<div class="t" style="left:643px;top:31.71px;font-size:5.98px;line-height:6.58px;color:#999;transform:scaleX(0.87);transform-origin:0 50%;">Search...</div>
<svg class="a" style="left:749px;top:31px;" width="7" height="7" viewBox="0 0 7 7"><circle cx="4" cy="3" r="2.2" stroke="#111" stroke-width="1.1" fill="none"/><line x1="2.5" y1="4.5" x2="0.5" y2="6.5" stroke="#111" stroke-width="1.2"/></svg>
<svg class="a" style="left:758px;top:30px;" width="9" height="8" viewBox="0 0 9 8"><rect x="3" y="1" width="6" height="6" fill="#5a8ad8"/><path d="M0.5 5h5M3 2.5v5" stroke="#fff" stroke-width="1.2"/></svg>
<div class="a" style="left:639px;top:39px;width:130px;height:9px;background:#222;"></div>
<div class="t" style="left:649px;top:41.91px;font-size:5.98px;line-height:6.58px;color:#dedede;transform:scaleX(0.87);transform-origin:0 50%;">Label</div>
<svg class="a" style="left:686px;top:40px;" width="4" height="3" viewBox="0 0 4 3"><polygon points="0,2.5 4,2.5 2,0" fill="#ddd"/></svg>
<div class="t" style="left:729px;top:41.91px;font-size:5.98px;line-height:6.58px;color:#dedede;transform:scaleX(0.87);transform-origin:0 50%;">Type</div>
<svg class="a" style="left:756px;top:45px;" width="4" height="3" viewBox="0 0 4 3"><polygon points="0,0 4,0 2,2.5" fill="#888"/></svg>
<div class="a" style="left:728px;top:39px;width:1px;height:9px;background:#333;"></div>
<div class="a" style="left:639px;top:48px;width:122px;height:156px;overflow:hidden">
<svg class="a" style="left:2px;top:1.7000000000000028px;" width="7" height="4.5" viewBox="0 0 7 4.5"><ellipse cx="3.5" cy="2.2" rx="3.2" ry="2" fill="#8fb0da"/><circle cx="3.5" cy="2.2" r="1" fill="#1e2a40"/></svg>
<svg class="a" style="left:11px;top:2.700000000000003px;" width="3" height="3" viewBox="0 0 3 3"><polygon points="3,0 3,3 0,3" fill="#bbb"/></svg>
<svg class="a" style="left:15px;top:1.2000000000000028px;" width="7" height="6" viewBox="0 0 7 6"><polygon points="0,2 3,0 7,2 7,5 3,6 0,5" fill="#c0c8d8"/><polygon points="0,2 3,0 7,2 3,3" fill="#eef"/></svg>
<div class="t" style="left:24px;top:1.81px;font-size:5.98px;line-height:6.58px;color:#d4d4d4;transform:scaleX(0.87);transform-origin:0 50%;width:74.7px;overflow:hidden;">ThirdPersonExampleMap (Editor)</div>
<div class="t" style="left:89px;top:1.81px;font-size:5.98px;line-height:6.58px;color:#8c8c8c;transform:scaleX(0.87);transform-origin:0 50%;width:37.9px;overflow:hidden;">World</div>
<svg class="a" style="left:2px;top:8.900000000000006px;" width="7" height="4.5" viewBox="0 0 7 4.5"><ellipse cx="3.5" cy="2.2" rx="3.2" ry="2" fill="#8fb0da"/><circle cx="3.5" cy="2.2" r="1" fill="#1e2a40"/></svg>
<svg class="a" style="left:16px;top:9.900000000000006px;" width="3" height="3" viewBox="0 0 3 3"><polygon points="3,0 3,3 0,3" fill="#bbb"/></svg>
<svg class="a" style="left:20px;top:8.900000000000006px;" width="7" height="5" viewBox="0 0 7 5"><path d="M0 1h3l1 1h3v3H0z" fill="#e8e8e8"/></svg>
<div class="t" style="left:29px;top:9.01px;font-size:5.98px;line-height:6.58px;color:#d4d4d4;transform:scaleX(0.87);transform-origin:0 50%;width:69.0px;overflow:hidden;">Lighting</div>
<div class="t" style="left:89px;top:9.01px;font-size:5.98px;line-height:6.58px;color:#8c8c8c;transform:scaleX(0.87);transform-origin:0 50%;width:37.9px;overflow:hidden;">Folder</div>
<svg class="a" style="left:2px;top:16.1px;" width="7" height="4.5" viewBox="0 0 7 4.5"><ellipse cx="3.5" cy="2.2" rx="3.2" ry="2" fill="#8fb0da"/><circle cx="3.5" cy="2.2" r="1" fill="#1e2a40"/></svg>
<svg class="a" style="left:25px;top:15.600000000000001px;" width="7" height="6" viewBox="0 0 7 6"><path d="M1 5l3-3M3 1h3M5 5h2" stroke="#e8e8e8" stroke-width="1"/><circle cx="1.2" cy="1.2" r="1" fill="#e0a040"/></svg>
<div class="t" style="left:34px;top:16.21px;font-size:5.98px;line-height:6.58px;color:#d4d4d4;transform:scaleX(0.87);transform-origin:0 50%;width:63.2px;overflow:hidden;">Light Source</div>
<div class="t" style="left:89px;top:16.21px;font-size:5.98px;line-height:6.58px;color:#8c8c8c;transform:scaleX(0.87);transform-origin:0 50%;width:37.9px;overflow:hidden;">DirectionalLight</div>
<svg class="a" style="left:2px;top:23.30000000000001px;" width="7" height="4.5" viewBox="0 0 7 4.5"><ellipse cx="3.5" cy="2.2" rx="3.2" ry="2" fill="#8fb0da"/><circle cx="3.5" cy="2.2" r="1" fill="#1e2a40"/></svg>
<svg class="a" style="left:25px;top:22.80000000000001px;" width="7" height="6" viewBox="0 0 7 6"><path d="M1 5l3-3M3 1h3M5 5h2" stroke="#e8e8e8" stroke-width="1"/><circle cx="1.2" cy="1.2" r="1" fill="#e0a040"/></svg>
<div class="t" style="left:34px;top:23.41px;font-size:5.98px;line-height:6.58px;color:#d4d4d4;transform:scaleX(0.87);transform-origin:0 50%;width:63.2px;overflow:hidden;">LightmassImportanceVolume</div>
<div class="t" style="left:89px;top:23.41px;font-size:5.98px;line-height:6.58px;color:#8c8c8c;transform:scaleX(0.87);transform-origin:0 50%;width:37.9px;overflow:hidden;">LightmassImportanceVolume</div>
<div class="a" style="left:2px;top:29.3px;width:120px;height:7.5px;background:#c9ad88;"></div>
<svg class="a" style="left:2px;top:30.5px;" width="7" height="4.5" viewBox="0 0 7 4.5"><ellipse cx="3.5" cy="2.2" rx="3.2" ry="2" fill="#8fb0da"/><circle cx="3.5" cy="2.2" r="1" fill="#1e2a40"/></svg>
<svg class="a" style="left:25px;top:29.5px;" width="7" height="7" viewBox="0 0 7 7"><rect x="1" y="1" width="5.5" height="6" fill="#4a6ab0"/><rect x="2" y="2" width="3" height="3" fill="#9ac"/><circle cx="1" cy="1" r="1" fill="#e0a040"/></svg>
<div class="t" style="left:34px;top:30.61px;font-size:5.98px;line-height:6.58px;color:#2a2418;transform:scaleX(0.87);transform-origin:0 50%;width:63.2px;overflow:hidden;">PostProcessVolume</div>
<div class="t" style="left:89px;top:30.61px;font-size:5.98px;line-height:6.58px;color:#5a4a38;transform:scaleX(0.87);transform-origin:0 50%;width:37.9px;overflow:hidden;">PostProcessVolume</div>
<svg class="a" style="left:2px;top:37.7px;" width="7" height="4.5" viewBox="0 0 7 4.5"><ellipse cx="3.5" cy="2.2" rx="3.2" ry="2" fill="#8fb0da"/><circle cx="3.5" cy="2.2" r="1" fill="#1e2a40"/></svg>
<svg class="a" style="left:25px;top:37.2px;" width="7" height="6" viewBox="0 0 7 6"><path d="M1 5l3-3M3 1h3M5 5h2" stroke="#e8e8e8" stroke-width="1"/><circle cx="1.2" cy="1.2" r="1" fill="#e0a040"/></svg>
<div class="t" style="left:34px;top:37.81px;font-size:5.98px;line-height:6.58px;color:#d4d4d4;transform:scaleX(0.87);transform-origin:0 50%;width:63.2px;overflow:hidden;">SkyLight</div>
<div class="t" style="left:89px;top:37.81px;font-size:5.98px;line-height:6.58px;color:#8c8c8c;transform:scaleX(0.87);transform-origin:0 50%;width:37.9px;overflow:hidden;">SkyLight</div>
<svg class="a" style="left:2px;top:44.900000000000006px;" width="7" height="4.5" viewBox="0 0 7 4.5"><ellipse cx="3.5" cy="2.2" rx="3.2" ry="2" fill="#8fb0da"/><circle cx="3.5" cy="2.2" r="1" fill="#1e2a40"/></svg>
<svg class="a" style="left:16px;top:45.900000000000006px;" width="3" height="3" viewBox="0 0 3 3"><polygon points="3,0 3,3 0,3" fill="#bbb"/></svg>
<svg class="a" style="left:20px;top:44.900000000000006px;" width="7" height="5" viewBox="0 0 7 5"><path d="M0 1h3l1 1h3v3H0z" fill="#e8e8e8"/></svg>
<div class="t" style="left:29px;top:45.01px;font-size:5.98px;line-height:6.58px;color:#d4d4d4;transform:scaleX(0.87);transform-origin:0 50%;width:69.0px;overflow:hidden;">RenderFX</div>
<div class="t" style="left:89px;top:45.01px;font-size:5.98px;line-height:6.58px;color:#8c8c8c;transform:scaleX(0.87);transform-origin:0 50%;width:37.9px;overflow:hidden;">Folder</div>
<svg class="a" style="left:2px;top:52.099999999999994px;" width="7" height="4.5" viewBox="0 0 7 4.5"><ellipse cx="3.5" cy="2.2" rx="3.2" ry="2" fill="#8fb0da"/><circle cx="3.5" cy="2.2" r="1" fill="#1e2a40"/></svg>
<svg class="a" style="left:25px;top:51.599999999999994px;" width="7" height="6" viewBox="0 0 7 6"><path d="M1 5l3-3M3 1h3M5 5h2" stroke="#e8e8e8" stroke-width="1"/><circle cx="1.2" cy="1.2" r="1" fill="#e0a040"/></svg>
<div class="t" style="left:34px;top:52.21px;font-size:5.98px;line-height:6.58px;color:#d4d4d4;transform:scaleX(0.87);transform-origin:0 50%;width:63.2px;overflow:hidden;">AtmosphericFog</div>
<div class="t" style="left:89px;top:52.21px;font-size:5.98px;line-height:6.58px;color:#8c8c8c;transform:scaleX(0.87);transform-origin:0 50%;width:37.9px;overflow:hidden;">AtmosphericFog</div>
<svg class="a" style="left:2px;top:59.30000000000001px;" width="7" height="4.5" viewBox="0 0 7 4.5"><ellipse cx="3.5" cy="2.2" rx="3.2" ry="2" fill="#8fb0da"/><circle cx="3.5" cy="2.2" r="1" fill="#1e2a40"/></svg>
<svg class="a" style="left:25px;top:58.80000000000001px;" width="7" height="6" viewBox="0 0 7 6"><path d="M1 5l3-3M3 1h3M5 5h2" stroke="#e8e8e8" stroke-width="1"/><circle cx="1.2" cy="1.2" r="1" fill="#e0a040"/></svg>
<div class="t" style="left:34px;top:59.41px;font-size:5.98px;line-height:6.58px;color:#d4d4d4;transform:scaleX(0.87);transform-origin:0 50%;width:63.2px;overflow:hidden;">SphereReflectionCapture</div>
<div class="t" style="left:89px;top:59.41px;font-size:5.98px;line-height:6.58px;color:#8c8c8c;transform:scaleX(0.87);transform-origin:0 50%;width:37.9px;overflow:hidden;">SphereReflectionCapture</div>
<svg class="a" style="left:2px;top:66.5px;" width="7" height="4.5" viewBox="0 0 7 4.5"><ellipse cx="3.5" cy="2.2" rx="3.2" ry="2" fill="#8fb0da"/><circle cx="3.5" cy="2.2" r="1" fill="#1e2a40"/></svg>
<svg class="a" style="left:20px;top:66.0px;" width="6" height="6" viewBox="0 0 6 6"><polygon points="0,1 4,0 6,1 6,5 2,6 0,5" fill="#7aa0d8"/><polygon points="0,1 4,0 6,1 2,2" fill="#c8d8f0"/></svg>
<div class="t" style="left:29px;top:66.61px;font-size:5.98px;line-height:6.58px;color:#d4d4d4;transform:scaleX(0.87);transform-origin:0 50%;width:69.0px;overflow:hidden;">Box Brush</div>
<div class="t" style="left:89px;top:66.61px;font-size:5.98px;line-height:6.58px;color:#8c8c8c;transform:scaleX(0.87);transform-origin:0 50%;width:37.9px;overflow:hidden;">Brush</div>
<svg class="a" style="left:2px;top:73.7px;" width="7" height="4.5" viewBox="0 0 7 4.5"><ellipse cx="3.5" cy="2.2" rx="3.2" ry="2" fill="#8fb0da"/><circle cx="3.5" cy="2.2" r="1" fill="#1e2a40"/></svg>
<svg class="a" style="left:20px;top:73.2px;" width="6" height="6" viewBox="0 0 6 6"><polygon points="0,1 4,0 6,1 6,5 2,6 0,5" fill="#7aa0d8"/><polygon points="0,1 4,0 6,1 2,2" fill="#c8d8f0"/></svg>
<div class="t" style="left:29px;top:73.81px;font-size:5.98px;line-height:6.58px;color:#d4d4d4;transform:scaleX(0.87);transform-origin:0 50%;width:69.0px;overflow:hidden;">Box Brush2</div>
<div class="t" style="left:89px;top:73.81px;font-size:5.98px;line-height:6.58px;color:#8c8c8c;transform:scaleX(0.87);transform-origin:0 50%;width:37.9px;overflow:hidden;">Brush</div>
<svg class="a" style="left:2px;top:80.9px;" width="7" height="4.5" viewBox="0 0 7 4.5"><ellipse cx="3.5" cy="2.2" rx="3.2" ry="2" fill="#8fb0da"/><circle cx="3.5" cy="2.2" r="1" fill="#1e2a40"/></svg>
<svg class="a" style="left:20px;top:80.4px;" width="6" height="6" viewBox="0 0 6 6"><polygon points="0,1 4,0 6,1 6,5 2,6 0,5" fill="#7aa0d8"/><polygon points="0,1 4,0 6,1 2,2" fill="#c8d8f0"/></svg>
<div class="t" style="left:29px;top:81.01px;font-size:5.98px;line-height:6.58px;color:#d4d4d4;transform:scaleX(0.87);transform-origin:0 50%;width:69.0px;overflow:hidden;">Box Brush3</div>
<div class="t" style="left:89px;top:81.01px;font-size:5.98px;line-height:6.58px;color:#8c8c8c;transform:scaleX(0.87);transform-origin:0 50%;width:37.9px;overflow:hidden;">Brush</div>
<svg class="a" style="left:2px;top:88.10000000000002px;" width="7" height="4.5" viewBox="0 0 7 4.5"><ellipse cx="3.5" cy="2.2" rx="3.2" ry="2" fill="#8fb0da"/><circle cx="3.5" cy="2.2" r="1" fill="#1e2a40"/></svg>
<svg class="a" style="left:20px;top:87.60000000000002px;" width="6" height="6" viewBox="0 0 6 6"><polygon points="0,1 4,0 6,1 6,5 2,6 0,5" fill="#7aa0d8"/><polygon points="0,1 4,0 6,1 2,2" fill="#c8d8f0"/></svg>
<div class="t" style="left:29px;top:88.21px;font-size:5.98px;line-height:6.58px;color:#d4d4d4;transform:scaleX(0.87);transform-origin:0 50%;width:69.0px;overflow:hidden;">Box Brush4</div>
<div class="t" style="left:89px;top:88.21px;font-size:5.98px;line-height:6.58px;color:#8c8c8c;transform:scaleX(0.87);transform-origin:0 50%;width:37.9px;overflow:hidden;">Brush</div>
<svg class="a" style="left:2px;top:95.30000000000001px;" width="7" height="4.5" viewBox="0 0 7 4.5"><ellipse cx="3.5" cy="2.2" rx="3.2" ry="2" fill="#8fb0da"/><circle cx="3.5" cy="2.2" r="1" fill="#1e2a40"/></svg>
<svg class="a" style="left:20px;top:94.80000000000001px;" width="6" height="6" viewBox="0 0 6 6"><polygon points="0,1 4,0 6,1 6,5 2,6 0,5" fill="#7aa0d8"/><polygon points="0,1 4,0 6,1 2,2" fill="#c8d8f0"/></svg>
<div class="t" style="left:29px;top:95.41px;font-size:5.98px;line-height:6.58px;color:#d4d4d4;transform:scaleX(0.87);transform-origin:0 50%;width:69.0px;overflow:hidden;">Box Brush5</div>
<div class="t" style="left:89px;top:95.41px;font-size:5.98px;line-height:6.58px;color:#8c8c8c;transform:scaleX(0.87);transform-origin:0 50%;width:37.9px;overflow:hidden;">Brush</div>
<svg class="a" style="left:2px;top:102.5px;" width="7" height="4.5" viewBox="0 0 7 4.5"><ellipse cx="3.5" cy="2.2" rx="3.2" ry="2" fill="#8fb0da"/><circle cx="3.5" cy="2.2" r="1" fill="#1e2a40"/></svg>
<svg class="a" style="left:20px;top:102.0px;" width="6" height="6" viewBox="0 0 6 6"><polygon points="0,1 4,0 6,1 6,5 2,6 0,5" fill="#7aa0d8"/><polygon points="0,1 4,0 6,1 2,2" fill="#c8d8f0"/></svg>
<div class="t" style="left:29px;top:102.61px;font-size:5.98px;line-height:6.58px;color:#d4d4d4;transform:scaleX(0.87);transform-origin:0 50%;width:69.0px;overflow:hidden;">Box Brush6</div>
<div class="t" style="left:89px;top:102.61px;font-size:5.98px;line-height:6.58px;color:#8c8c8c;transform:scaleX(0.87);transform-origin:0 50%;width:37.9px;overflow:hidden;">Brush</div>
<svg class="a" style="left:2px;top:109.69999999999999px;" width="7" height="4.5" viewBox="0 0 7 4.5"><ellipse cx="3.5" cy="2.2" rx="3.2" ry="2" fill="#8fb0da"/><circle cx="3.5" cy="2.2" r="1" fill="#1e2a40"/></svg>
<svg class="a" style="left:20px;top:109.19999999999999px;" width="6" height="6" viewBox="0 0 6 6"><polygon points="0,1 4,0 6,1 6,5 2,6 0,5" fill="#7aa0d8"/><polygon points="0,1 4,0 6,1 2,2" fill="#c8d8f0"/></svg>
<div class="t" style="left:29px;top:109.81px;font-size:5.98px;line-height:6.58px;color:#d4d4d4;transform:scaleX(0.87);transform-origin:0 50%;width:69.0px;overflow:hidden;">Box Brush7</div>
<div class="t" style="left:89px;top:109.81px;font-size:5.98px;line-height:6.58px;color:#8c8c8c;transform:scaleX(0.87);transform-origin:0 50%;width:37.9px;overflow:hidden;">Brush</div>
<svg class="a" style="left:2px;top:116.9px;" width="7" height="4.5" viewBox="0 0 7 4.5"><ellipse cx="3.5" cy="2.2" rx="3.2" ry="2" fill="#8fb0da"/><circle cx="3.5" cy="2.2" r="1" fill="#1e2a40"/></svg>
<svg class="a" style="left:20px;top:116.4px;" width="6" height="6" viewBox="0 0 6 6"><polygon points="0,1 4,0 6,1 6,5 2,6 0,5" fill="#7aa0d8"/><polygon points="0,1 4,0 6,1 2,2" fill="#c8d8f0"/></svg>
<div class="t" style="left:29px;top:117.01px;font-size:5.98px;line-height:6.58px;color:#d4d4d4;transform:scaleX(0.87);transform-origin:0 50%;width:69.0px;overflow:hidden;">Box Brush8</div>
<div class="t" style="left:89px;top:117.01px;font-size:5.98px;line-height:6.58px;color:#8c8c8c;transform:scaleX(0.87);transform-origin:0 50%;width:37.9px;overflow:hidden;">Brush</div>
<svg class="a" style="left:2px;top:124.10000000000002px;" width="7" height="4.5" viewBox="0 0 7 4.5"><ellipse cx="3.5" cy="2.2" rx="3.2" ry="2" fill="#8fb0da"/><circle cx="3.5" cy="2.2" r="1" fill="#1e2a40"/></svg>
<svg class="a" style="left:20px;top:123.60000000000002px;" width="6" height="6" viewBox="0 0 6 6"><polygon points="0,1 4,0 6,1 6,5 2,6 0,5" fill="#7aa0d8"/><polygon points="0,1 4,0 6,1 2,2" fill="#c8d8f0"/></svg>
<div class="t" style="left:29px;top:124.21px;font-size:5.98px;line-height:6.58px;color:#d4d4d4;transform:scaleX(0.87);transform-origin:0 50%;width:69.0px;overflow:hidden;">Box Brush9</div>
<div class="t" style="left:89px;top:124.21px;font-size:5.98px;line-height:6.58px;color:#8c8c8c;transform:scaleX(0.87);transform-origin:0 50%;width:37.9px;overflow:hidden;">Brush</div>
<svg class="a" style="left:2px;top:131.3px;" width="7" height="4.5" viewBox="0 0 7 4.5"><ellipse cx="3.5" cy="2.2" rx="3.2" ry="2" fill="#8fb0da"/><circle cx="3.5" cy="2.2" r="1" fill="#1e2a40"/></svg>
<svg class="a" style="left:20px;top:130.8px;" width="6" height="6" viewBox="0 0 6 6"><polygon points="0,1 4,0 6,1 6,5 2,6 0,5" fill="#7aa0d8"/><polygon points="0,1 4,0 6,1 2,2" fill="#c8d8f0"/></svg>
<div class="t" style="left:29px;top:131.41px;font-size:5.98px;line-height:6.58px;color:#d4d4d4;transform:scaleX(0.87);transform-origin:0 50%;width:69.0px;overflow:hidden;">Box Brush10</div>
<div class="t" style="left:89px;top:131.41px;font-size:5.98px;line-height:6.58px;color:#8c8c8c;transform:scaleX(0.87);transform-origin:0 50%;width:37.9px;overflow:hidden;">Brush</div>
<svg class="a" style="left:2px;top:138.5px;" width="7" height="4.5" viewBox="0 0 7 4.5"><ellipse cx="3.5" cy="2.2" rx="3.2" ry="2" fill="#8fb0da"/><circle cx="3.5" cy="2.2" r="1" fill="#1e2a40"/></svg>
<svg class="a" style="left:20px;top:138.0px;" width="6" height="6" viewBox="0 0 6 6"><polygon points="0,1 4,0 6,1 6,5 2,6 0,5" fill="#7aa0d8"/><polygon points="0,1 4,0 6,1 2,2" fill="#c8d8f0"/></svg>
<div class="t" style="left:29px;top:138.61px;font-size:5.98px;line-height:6.58px;color:#d4d4d4;transform:scaleX(0.87);transform-origin:0 50%;width:69.0px;overflow:hidden;">Box Brush11</div>
<div class="t" style="left:89px;top:138.61px;font-size:5.98px;line-height:6.58px;color:#8c8c8c;transform:scaleX(0.87);transform-origin:0 50%;width:37.9px;overflow:hidden;">Brush</div>
<svg class="a" style="left:2px;top:145.7px;" width="7" height="4.5" viewBox="0 0 7 4.5"><ellipse cx="3.5" cy="2.2" rx="3.2" ry="2" fill="#8fb0da"/><circle cx="3.5" cy="2.2" r="1" fill="#1e2a40"/></svg>
<svg class="a" style="left:20px;top:145.2px;" width="6" height="6" viewBox="0 0 6 6"><polygon points="0,1 4,0 6,1 6,5 2,6 0,5" fill="#7aa0d8"/><polygon points="0,1 4,0 6,1 2,2" fill="#c8d8f0"/></svg>
<div class="t" style="left:29px;top:145.81px;font-size:5.98px;line-height:6.58px;color:#d4d4d4;transform:scaleX(0.87);transform-origin:0 50%;width:69.0px;overflow:hidden;">Box Brush12</div>
<div class="t" style="left:89px;top:145.81px;font-size:5.98px;line-height:6.58px;color:#8c8c8c;transform:scaleX(0.87);transform-origin:0 50%;width:37.9px;overflow:hidden;">Brush</div>
<svg class="a" style="left:2px;top:152.90000000000003px;" width="7" height="4.5" viewBox="0 0 7 4.5"><ellipse cx="3.5" cy="2.2" rx="3.2" ry="2" fill="#8fb0da"/><circle cx="3.5" cy="2.2" r="1" fill="#1e2a40"/></svg>
<svg class="a" style="left:20px;top:152.40000000000003px;" width="6" height="6" viewBox="0 0 6 6"><polygon points="0,1 4,0 6,1 6,5 2,6 0,5" fill="#7aa0d8"/><polygon points="0,1 4,0 6,1 2,2" fill="#c8d8f0"/></svg>
<div class="t" style="left:29px;top:153.01px;font-size:5.98px;line-height:6.58px;color:#d4d4d4;transform:scaleX(0.87);transform-origin:0 50%;width:69.0px;overflow:hidden;">Box Brush13</div>
<div class="t" style="left:89px;top:153.01px;font-size:5.98px;line-height:6.58px;color:#8c8c8c;transform:scaleX(0.87);transform-origin:0 50%;width:37.9px;overflow:hidden;">Brush</div>
</div>
<div class="a" style="left:766px;top:49px;width:1px;height:155px;background:#505050;"></div>
<div class="a" style="left:762px;top:50px;width:4px;height:37px;background:#c4c4c4;"></div>
<div class="a" style="left:639px;top:204px;width:130px;height:1px;background:#4e4e4e;"></div>
<div class="t" style="left:644px;top:208.20px;font-size:5.63px;line-height:6.20px;color:#d0d0d0;transform:scaleX(0.87);transform-origin:0 50%;">123 actors (1 selected)</div>
<svg class="a" style="left:724px;top:208px;" width="7" height="5" viewBox="0 0 7 5"><ellipse cx="3.5" cy="2.5" rx="3.3" ry="2" fill="#a8c0e0"/><circle cx="3.5" cy="2.5" r="1" fill="#2a3a5a"/></svg>
<div class="t" style="left:732px;top:208.20px;font-size:5.63px;line-height:6.20px;color:#cfcfcf;transform:scaleX(0.87);transform-origin:0 50%;letter-spacing:-0.15px;">View Options</div>
<svg class="a" style="left:761.5px;top:209.5px;" width="4" height="3" viewBox="0 0 4 3"><polygon points="0,0 4,0 2,2.5" fill="#ccc"/></svg>
<div class="a" style="left:636px;top:218px;width:134px;height:11px;background:#232323;"></div>
<div class="a" style="left:639px;top:220px;width:59px;height:9px;background:linear-gradient(#575757,#474747);border-radius:1px 1px 0 0"></div>
<svg class="a" style="left:642px;top:221px;" width="6" height="6" viewBox="0 0 6 6"><circle cx="3" cy="3" r="2.6" fill="#8ab0e8"/><rect x="2.5" y="2" width="1" height="3" fill="#223"/></svg>
<div class="t" style="left:650px;top:221.01px;font-size:5.98px;line-height:6.58px;color:#a8a8a8;transform:scaleX(0.87);transform-origin:0 50%;">Details</div>
<div class="t" style="left:692px;top:222.14px;font-size:5.75px;line-height:6.33px;color:#777;transform:scaleX(0.87);transform-origin:0 50%;">×</div>
<div class="a" style="left:699px;top:220px;width:61px;height:9px;background:linear-gradient(#4a4a4a,#3e3e3e);border-radius:1px 1px 0 0"></div>
<svg class="a" style="left:702px;top:221px;" width="7" height="7" viewBox="0 0 7 7"><circle cx="3.5" cy="3.5" r="3" fill="#6a9ae0"/><circle cx="2.8" cy="2.6" r="1.3" fill="#e8f0ff"/></svg>
<div class="t" style="left:711px;top:221.01px;font-size:5.98px;line-height:6.58px;color:#b0b0b0;transform:scaleX(0.87);transform-origin:0 50%;">World Settings</div>
<div class="t" style="left:754px;top:222.14px;font-size:5.75px;line-height:6.33px;color:#777;transform:scaleX(0.87);transform-origin:0 50%;">×</div>
<div class="a" style="left:638px;top:229px;width:132px;height:188px;background:#3d3d3d;border:1px solid #4c4c4c"></div>
<svg class="a" style="left:640px;top:231px;" width="5" height="6" viewBox="0 0 5 6"><polygon points="0,6 5,0 5,6" fill="#ccc"/></svg>
<div class="a" style="left:647px;top:231px;width:81px;height:8px;background:#cbcbcb;border-radius:1px"></div>
<div class="t" style="left:649px;top:232.17px;font-size:5.86px;line-height:6.45px;color:#1e1e1e;transform:scaleX(0.87);transform-origin:0 50%;">PostProcessVolume</div>
<svg class="a" style="left:730px;top:231px;" width="7" height="7" viewBox="0 0 7 7"><circle cx="3.5" cy="3.5" r="2.8" stroke="#556" stroke-width=".8" fill="#445"/></svg>
<svg class="a" style="left:759px;top:230px;" width="8" height="8" viewBox="0 0 8 8"><rect x="2" y="4" width="5" height="4" fill="#ddd"/><path d="M2.5 4V2a1.5 1.5 0 0 1 3 0" stroke="#ddd" fill="none" stroke-width=".8"/></svg>
<div class="a" style="left:640px;top:240px;width:100px;height:8px;background:#cbcbcb;border-radius:1px"></div>
<div class="t" style="left:642px;top:241.37px;font-size:5.86px;line-height:6.45px;color:#a0a0a0;transform:scaleX(0.87);transform-origin:0 50%;">Search</div>
<svg class="a" style="left:734px;top:241px;" width="7" height="7" viewBox="0 0 7 7"><circle cx="4" cy="3" r="2.2" stroke="#111" stroke-width="1.1" fill="none"/><line x1="2.5" y1="4.5" x2="0.5" y2="6.5" stroke="#111" stroke-width="1.2"/></svg>
<div class="a" style="left:744px;top:239px;width:11px;height:10px;background:linear-gradient(90deg,#999,#ddd,#999);border:1px solid #555"></div>
<svg class="a" style="left:756px;top:242px;" width="7" height="5" viewBox="0 0 7 5"><ellipse cx="3.5" cy="2.5" rx="3.3" ry="2" fill="#a8c0e0"/><circle cx="3.5" cy="2.5" r="1" fill="#2a3a5a"/></svg>
<svg class="a" style="left:764px;top:243px;" width="4" height="3" viewBox="0 0 4 3"><polygon points="0,0 4,0 2,2.5" fill="#ccc"/></svg>
<div class="a" style="left:639px;top:250px;width:127px;height:9px;background:#2a2a2a;"></div>
<svg class="a" style="left:641px;top:252px;" width="3" height="3" viewBox="0 0 3 3"><polygon points="3,0 3,3 0,3" fill="#ccc"/></svg>
<div class="t" style="left:645px;top:251.37px;font-size:5.86px;line-height:6.45px;color:#e8e8e8;transform:scaleX(0.87);transform-origin:0 50%;">Transform</div>
<div class="a" style="left:639px;top:259px;width:127px;height:29px;background:#393939;"></div>
<div class="a" style="left:681px;top:259px;width:1px;height:29px;background:#303030;"></div>
<div class="t" style="left:645px;top:260.44px;font-size:5.75px;line-height:6.33px;color:#bdbdbd;transform:scaleX(0.87);transform-origin:0 50%;">Location</div>
<svg class="a" style="left:664px;top:261.8px;" width="4" height="3" viewBox="0 0 4 3"><polygon points="0,0 4,0 2,2.5" fill="#bbb"/></svg>
<div class="t" style="left:645px;top:269.84px;font-size:5.75px;line-height:6.33px;color:#bdbdbd;transform:scaleX(0.87);transform-origin:0 50%;">Rotation</div>
<svg class="a" style="left:664px;top:271.2px;" width="4" height="3" viewBox="0 0 4 3"><polygon points="0,0 4,0 2,2.5" fill="#bbb"/></svg>
<div class="t" style="left:645px;top:279.34px;font-size:5.75px;line-height:6.33px;color:#bdbdbd;transform:scaleX(0.87);transform-origin:0 50%;">Scale</div>
<svg class="a" style="left:657px;top:280.7px;" width="4" height="3" viewBox="0 0 4 3"><polygon points="0,0 4,0 2,2.5" fill="#bbb"/></svg>
<div class="a" style="left:683px;top:259.4px;width:21px;height:7.4px;background:#d2d2d2;border-radius:1px"></div>
<div class="a" style="left:683px;top:259.4px;width:1px;height:7.4px;background:#c83a1a;"></div>
<div class="t" style="left:685px;top:260.96px;font-size:5.52px;line-height:6.07px;color:#2a2a2a;transform:scaleX(0.87);transform-origin:0 50%;width:20.7px;overflow:hidden;">-926.168</div>
<div class="a" style="left:705px;top:259.4px;width:21px;height:7.4px;background:#d2d2d2;border-radius:1px"></div>
<div class="a" style="left:705px;top:259.4px;width:1px;height:7.4px;background:#6ab02a;"></div>
<div class="t" style="left:707px;top:260.96px;font-size:5.52px;line-height:6.07px;color:#2a2a2a;transform:scaleX(0.87);transform-origin:0 50%;width:20.7px;overflow:hidden;">6.159668</div>
<div class="a" style="left:727px;top:259.4px;width:21px;height:7.4px;background:#d2d2d2;border-radius:1px"></div>
<div class="a" style="left:727px;top:259.4px;width:1px;height:7.4px;background:#3a7ae0;"></div>
<div class="t" style="left:729px;top:260.96px;font-size:5.52px;line-height:6.07px;color:#2a2a2a;transform:scaleX(0.87);transform-origin:0 50%;width:20.7px;overflow:hidden;">660.0</div>
<div class="a" style="left:683px;top:268.9px;width:21px;height:7.4px;background:#d2d2d2;border-radius:1px"></div>
<div class="a" style="left:683px;top:268.9px;width:1px;height:7.4px;background:#c83a1a;"></div>
<div class="t" style="left:685px;top:270.46px;font-size:5.52px;line-height:6.07px;color:#2a2a2a;transform:scaleX(0.87);transform-origin:0 50%;width:20.7px;overflow:hidden;">0.0 °</div>
<svg class="a" style="left:698px;top:270.5px;" width="4" height="4" viewBox="0 0 4 4"><path d="M0 4L4 0M2.5 0H4V1.5M0 2.5V4H1.5" stroke="#111" stroke-width=".8" fill="none"/></svg>
<div class="a" style="left:705px;top:268.9px;width:21px;height:7.4px;background:#d2d2d2;border-radius:1px"></div>
<div class="a" style="left:705px;top:268.9px;width:1px;height:7.4px;background:#6ab02a;"></div>
<div class="t" style="left:707px;top:270.46px;font-size:5.52px;line-height:6.07px;color:#2a2a2a;transform:scaleX(0.87);transform-origin:0 50%;width:20.7px;overflow:hidden;">0.0 °</div>
<svg class="a" style="left:720px;top:270.5px;" width="4" height="4" viewBox="0 0 4 4"><path d="M0 4L4 0M2.5 0H4V1.5M0 2.5V4H1.5" stroke="#111" stroke-width=".8" fill="none"/></svg>
<div class="a" style="left:727px;top:268.9px;width:21px;height:7.4px;background:#d2d2d2;border-radius:1px"></div>
<div class="a" style="left:727px;top:268.9px;width:1px;height:7.4px;background:#3a7ae0;"></div>
<div class="t" style="left:729px;top:270.46px;font-size:5.52px;line-height:6.07px;color:#2a2a2a;transform:scaleX(0.87);transform-origin:0 50%;width:20.7px;overflow:hidden;">0.0 °</div>
<svg class="a" style="left:742px;top:270.5px;" width="4" height="4" viewBox="0 0 4 4"><path d="M0 4L4 0M2.5 0H4V1.5M0 2.5V4H1.5" stroke="#111" stroke-width=".8" fill="none"/></svg>
<div class="a" style="left:683px;top:278.4px;width:21px;height:7.4px;background:#d2d2d2;border-radius:1px"></div>
<div class="a" style="left:683px;top:278.4px;width:1px;height:7.4px;background:#c83a1a;"></div>
<div class="t" style="left:685px;top:279.96px;font-size:5.52px;line-height:6.07px;color:#2a2a2a;transform:scaleX(0.87);transform-origin:0 50%;width:20.7px;overflow:hidden;">24.25</div>
<div class="a" style="left:705px;top:278.4px;width:21px;height:7.4px;background:#d2d2d2;border-radius:1px"></div>
<div class="a" style="left:705px;top:278.4px;width:1px;height:7.4px;background:#6ab02a;"></div>
<div class="t" style="left:707px;top:279.96px;font-size:5.52px;line-height:6.07px;color:#2a2a2a;transform:scaleX(0.87);transform-origin:0 50%;width:20.7px;overflow:hidden;">24.0</div>
<div class="a" style="left:727px;top:278.4px;width:21px;height:7.4px;background:#d2d2d2;border-radius:1px"></div>
<div class="a" style="left:727px;top:278.4px;width:1px;height:7.4px;background:#3a7ae0;"></div>
<div class="t" style="left:729px;top:279.96px;font-size:5.52px;line-height:6.07px;color:#2a2a2a;transform:scaleX(0.87);transform-origin:0 50%;width:20.7px;overflow:hidden;">6.75</div>
<svg class="a" style="left:752px;top:260px;" width="4" height="5" viewBox="0 0 4 5"><path d="M3.5 1A2 2 0 1 0 3.5 4" stroke="#d8a020" stroke-width=".9" fill="none"/></svg>
<svg class="a" style="left:749px;top:279px;" width="6" height="6" viewBox="0 0 6 6"><rect x="0" y="2" width="4" height="4" fill="#ddd"/><path d="M1 2V1a1 1 0 0 1 2 0" stroke="#ddd" fill="none" stroke-width=".7"/></svg>
<svg class="a" style="left:755px;top:279px;" width="4" height="5" viewBox="0 0 4 5"><path d="M3.5 1A2 2 0 1 0 3.5 4" stroke="#d8a020" stroke-width=".9" fill="none"/></svg>
<div class="a" style="left:639px;top:288px;width:127px;height:1px;background:#555;"></div>
<div class="a" style="left:639px;top:289px;width:127px;height:9px;background:#2a2a2a;"></div>
<svg class="a" style="left:641px;top:291px;" width="3" height="3" viewBox="0 0 3 3"><polygon points="3,0 3,3 0,3" fill="#ccc"/></svg>
<div class="t" style="left:645px;top:290.37px;font-size:5.86px;line-height:6.45px;color:#e8e8e8;transform:scaleX(0.87);transform-origin:0 50%;">Color Grading</div>
<div class="a" style="left:639px;top:298px;width:42px;height:60px;background:#3a3a3a;"></div>
<div class="a" style="left:682px;top:298px;width:84px;height:60px;background:#393939;"></div>
<div class="a" style="left:681px;top:298px;width:1px;height:60px;background:#2e2e2e;"></div>
<svg class="a" style="left:641px;top:300.8px;" width="3" height="4" viewBox="0 0 3 4"><polygon points="0.3,0.3 2.7,2 0.3,3.7" fill="none" stroke="#999" stroke-width=".5"/></svg>
<div class="t" style="left:645px;top:299.64px;font-size:5.75px;line-height:6.33px;color:#c8c8c8;transform:scaleX(0.87);transform-origin:0 50%;">WhiteBalance</div>
<svg class="a" style="left:641px;top:309.90000000000003px;" width="3" height="4" viewBox="0 0 3 4"><polygon points="0.3,0.3 2.7,2 0.3,3.7" fill="none" stroke="#999" stroke-width=".5"/></svg>
<div class="t" style="left:645px;top:308.74px;font-size:5.75px;line-height:6.33px;color:#c8c8c8;transform:scaleX(0.87);transform-origin:0 50%;">Global</div>
<svg class="a" style="left:641px;top:319.0px;" width="3" height="4" viewBox="0 0 3 4"><polygon points="0.3,0.3 2.7,2 0.3,3.7" fill="none" stroke="#999" stroke-width=".5"/></svg>
<div class="t" style="left:645px;top:317.84px;font-size:5.75px;line-height:6.33px;color:#c8c8c8;transform:scaleX(0.87);transform-origin:0 50%;">Shadows</div>
<svg class="a" style="left:641px;top:328.1px;" width="3" height="4" viewBox="0 0 3 4"><polygon points="0.3,0.3 2.7,2 0.3,3.7" fill="none" stroke="#999" stroke-width=".5"/></svg>
<div class="t" style="left:645px;top:326.94px;font-size:5.75px;line-height:6.33px;color:#c8c8c8;transform:scaleX(0.87);transform-origin:0 50%;">Midtones</div>
<svg class="a" style="left:641px;top:337.2px;" width="3" height="4" viewBox="0 0 3 4"><polygon points="0.3,0.3 2.7,2 0.3,3.7" fill="none" stroke="#999" stroke-width=".5"/></svg>
<div class="t" style="left:645px;top:336.04px;font-size:5.75px;line-height:6.33px;color:#c8c8c8;transform:scaleX(0.87);transform-origin:0 50%;">Highlights</div>
<svg class="a" style="left:641px;top:346.3px;" width="3" height="4" viewBox="0 0 3 4"><polygon points="0.3,0.3 2.7,2 0.3,3.7" fill="none" stroke="#999" stroke-width=".5"/></svg>
<div class="t" style="left:645px;top:345.14px;font-size:5.75px;line-height:6.33px;color:#c8c8c8;transform:scaleX(0.87);transform-origin:0 50%;">Misc</div>
<div class="a" style="left:639px;top:358px;width:127px;height:1px;background:#555;"></div>
<div class="a" style="left:639px;top:359px;width:127px;height:8px;background:#2a2a2a;"></div>
<svg class="a" style="left:641px;top:361px;" width="3" height="3" viewBox="0 0 3 3"><polygon points="3,0 3,3 0,3" fill="#ccc"/></svg>
<div class="t" style="left:645px;top:360.37px;font-size:5.86px;line-height:6.45px;color:#e8e8e8;transform:scaleX(0.87);transform-origin:0 50%;">Film</div>
<div class="a" style="left:639px;top:367px;width:127px;height:48px;background:#393939;"></div>
<div class="a" style="left:645px;top:369.5px;width:6px;height:6px;background:#8a8a8a;border-radius:1px"></div>
<div class="t" style="left:652px;top:370.14px;font-size:5.75px;line-height:6.33px;color:#6e6e6e;transform:scaleX(0.87);transform-origin:0 50%;">Slope</div>
<div class="a" style="left:683px;top:369.0px;width:42px;height:7px;background:#6f6f6f;border-radius:1px"></div>
<div class="t" style="left:685px;top:370.36px;font-size:5.52px;line-height:6.07px;color:#3a3a3a;transform:scaleX(0.87);transform-origin:0 50%;">0.88</div>
<svg class="a" style="left:719px;top:370.5px;" width="4" height="4" viewBox="0 0 4 4"><path d="M0 4L4 0M2.5 0H4V1.5M0 2.5V4H1.5" stroke="#222" stroke-width=".8" fill="none"/></svg>
<div class="a" style="left:645px;top:379px;width:6px;height:6px;background:#8a8a8a;border-radius:1px"></div>
<div class="t" style="left:652px;top:379.64px;font-size:5.75px;line-height:6.33px;color:#6e6e6e;transform:scaleX(0.87);transform-origin:0 50%;">Toe</div>
<div class="a" style="left:683px;top:378.5px;width:42px;height:7px;background:#6f6f6f;border-radius:1px"></div>
<div class="t" style="left:685px;top:379.86px;font-size:5.52px;line-height:6.07px;color:#3a3a3a;transform:scaleX(0.87);transform-origin:0 50%;">0.55</div>
<svg class="a" style="left:719px;top:380px;" width="4" height="4" viewBox="0 0 4 4"><path d="M0 4L4 0M2.5 0H4V1.5M0 2.5V4H1.5" stroke="#222" stroke-width=".8" fill="none"/></svg>
<div class="a" style="left:645px;top:389px;width:6px;height:6px;background:#8a8a8a;border-radius:1px"></div>
<div class="t" style="left:652px;top:389.64px;font-size:5.75px;line-height:6.33px;color:#6e6e6e;transform:scaleX(0.87);transform-origin:0 50%;">Shoulder</div>
<div class="a" style="left:683px;top:388.5px;width:42px;height:7px;background:#6f6f6f;border-radius:1px"></div>
<div class="t" style="left:685px;top:389.86px;font-size:5.52px;line-height:6.07px;color:#3a3a3a;transform:scaleX(0.87);transform-origin:0 50%;">0.26</div>
<svg class="a" style="left:719px;top:390px;" width="4" height="4" viewBox="0 0 4 4"><path d="M0 4L4 0M2.5 0H4V1.5M0 2.5V4H1.5" stroke="#222" stroke-width=".8" fill="none"/></svg>
<div class="a" style="left:645px;top:398.5px;width:6px;height:6px;background:#8a8a8a;border-radius:1px"></div>
<div class="t" style="left:652px;top:399.14px;font-size:5.75px;line-height:6.33px;color:#6e6e6e;transform:scaleX(0.87);transform-origin:0 50%;">Black clip</div>
<div class="a" style="left:683px;top:398.0px;width:42px;height:7px;background:#6f6f6f;border-radius:1px"></div>
<div class="t" style="left:685px;top:399.36px;font-size:5.52px;line-height:6.07px;color:#3a3a3a;transform:scaleX(0.87);transform-origin:0 50%;">0.0</div>
<svg class="a" style="left:719px;top:399.5px;" width="4" height="4" viewBox="0 0 4 4"><path d="M0 4L4 0M2.5 0H4V1.5M0 2.5V4H1.5" stroke="#222" stroke-width=".8" fill="none"/></svg>
<div class="a" style="left:645px;top:408px;width:6px;height:6px;background:#8a8a8a;border-radius:1px"></div>
<div class="t" style="left:652px;top:408.64px;font-size:5.75px;line-height:6.33px;color:#6e6e6e;transform:scaleX(0.87);transform-origin:0 50%;">White clip</div>
<div class="a" style="left:683px;top:407.5px;width:42px;height:7px;background:#6f6f6f;border-radius:1px"></div>
<div class="t" style="left:685px;top:408.86px;font-size:5.52px;line-height:6.07px;color:#3a3a3a;transform:scaleX(0.87);transform-origin:0 50%;">0.04</div>
<svg class="a" style="left:719px;top:409px;" width="4" height="4" viewBox="0 0 4 4"><path d="M0 4L4 0M2.5 0H4V1.5M0 2.5V4H1.5" stroke="#222" stroke-width=".8" fill="none"/></svg>
<div class="a" style="left:766px;top:250px;width:1px;height:165px;background:#4e4e4e;"></div>
<div class="a" style="left:763.5px;top:251px;width:3.5px;height:53px;background:#c4c4c4;"></div>
<div class="a" style="left:0px;top:315px;width:636px;height:11px;background:#232323;"></div>
<div class="a" style="left:2px;top:317px;width:60px;height:9px;background:linear-gradient(#575757,#474747);border-radius:1px 1px 0 0"></div>
<svg class="a" style="left:4px;top:318px;" width="6" height="6" viewBox="0 0 6 6"><rect x="0" y="0" width="6" height="6" fill="#6a9ae0"/><rect x="1" y="1" width="4" height="1" fill="#eef"/></svg>
<div class="t" style="left:12px;top:317.91px;font-size:5.98px;line-height:6.58px;color:#a8a8a8;transform:scaleX(0.87);transform-origin:0 50%;">Content Browser</div>
<div class="t" style="left:55px;top:319.14px;font-size:5.75px;line-height:6.33px;color:#777;transform:scaleX(0.87);transform-origin:0 50%;">×</div>
<div class="a" style="left:0px;top:325px;width:636px;height:92px;background:#3d3d3d;border:1px solid #4c4c4c"></div>
<div class="a" style="left:1px;top:326px;width:634px;height:14px;background:#3e3e3e;border-bottom:1px solid #4a4a4a"></div>
<div class="a" style="left:120px;top:326px;width:1px;height:14px;background:#2c2c2c;"></div>
<div class="a" style="left:2px;top:328px;width:44px;height:10px;background:#4ca347;border-radius:1px"></div>
<svg class="a" style="left:4px;top:329px;" width="6" height="8" viewBox="0 0 6 8"><path d="M0 0h4l2 2v6H0z" fill="#f4f4f4"/></svg>
<div class="t" style="left:12px;top:329.97px;font-size:6.79px;line-height:7.46px;color:#f4f4f4;font-weight:bold;transform:scaleX(0.87);transform-origin:0 50%;letter-spacing:-0.1px;">Add New</div>
<svg class="a" style="left:40px;top:332px;" width="4" height="3" viewBox="0 0 4 3"><polygon points="0,0 4,0 2,2.5" fill="#eee"/></svg>
<svg class="a" style="left:51px;top:329px;" width="7" height="8" viewBox="0 0 7 8"><path d="M3.5 0v5M1.5 3l2 2 2-2" stroke="#ddd" stroke-width="1" fill="none"/><rect x="0" y="6" width="7" height="1.5" fill="#ddd"/></svg>
<div class="t" style="left:59px;top:330.31px;font-size:6.90px;line-height:7.59px;color:#e8e8e8;font-weight:bold;transform:scaleX(0.87);transform-origin:0 50%;letter-spacing:-0.2px;">Import</div>
<svg class="a" style="left:84px;top:329px;" width="7" height="8" viewBox="0 0 7 8"><rect x="0.5" y="1" width="6" height="6.5" fill="none" stroke="#ddd" stroke-width=".8"/><rect x="2" y="1" width="3" height="2" fill="#ddd"/></svg>
<div class="t" style="left:92px;top:330.31px;font-size:6.90px;line-height:7.59px;color:#e8e8e8;font-weight:bold;transform:scaleX(0.87);transform-origin:0 50%;letter-spacing:-0.2px;">Save All</div>
<div class="a" style="left:121px;top:328px;width:1px;height:10px;background:#2a2a2a;"></div>
<svg class="a" style="left:123px;top:330px;" width="6" height="6" viewBox="0 0 6 6"><path d="M5.5 3H1M3 1L1 3l2 2" stroke="#eee" stroke-width="1.1" fill="none"/></svg>
<svg class="a" style="left:131px;top:330px;" width="6" height="6" viewBox="0 0 6 6"><path d="M.5 3H5M3 1l2 2-2 2" stroke="#999" stroke-width="1" fill="none"/></svg>
<div class="a" style="left:139px;top:328px;width:1px;height:10px;background:#2a2a2a;"></div>
<svg class="a" style="left:143px;top:330px;" width="8" height="6" viewBox="0 0 8 6"><path d="M0 0h3l1 1h4v5H0z" fill="#e0e0e0"/><path d="M1 2h7l-1 4H0z" fill="#bbb"/></svg>
<div class="t" style="left:153px;top:330.31px;font-size:6.90px;line-height:7.59px;color:#eeeeee;font-weight:bold;transform:scaleX(0.87);transform-origin:0 50%;letter-spacing:-0.2px;">Content</div>
<svg class="a" style="left:180px;top:331px;" width="3" height="4" viewBox="0 0 3 4"><polygon points="0,0 3,2 0,4" fill="#eee"/></svg>
<div class="a" style="left:1px;top:340px;width:634px;height:1px;background:#2a2a2a;"></div>
<svg class="a" style="left:3px;top:343px;" width="8" height="6" viewBox="0 0 8 6"><g fill="#ddd"><rect x="0" y="0" width="2" height="1"/><rect x="3" y="0" width="5" height="1"/><rect x="0" y="2.5" width="2" height="1"/><rect x="3" y="2.5" width="5" height="1"/><rect x="0" y="5" width="2" height="1"/><rect x="3" y="5" width="5" height="1"/></g></svg>
<svg class="a" style="left:14px;top:343px;" width="5" height="5" viewBox="0 0 5 5"><polygon points="0,0 5,0 3,2.5 3,5 2,5 2,2.5" fill="#ddd"/></svg>
<div class="t" style="left:19px;top:342.71px;font-size:5.98px;line-height:6.58px;color:#dedede;font-weight:bold;transform:scaleX(0.87);transform-origin:0 50%;letter-spacing:-0.15px;">Filters</div>
<svg class="a" style="left:34px;top:345px;" width="4" height="3" viewBox="0 0 4 3"><polygon points="0,0 4,0 2,2.5" fill="#ccc"/></svg>
<div class="a" style="left:40px;top:342px;width:585px;height:8px;background:#cbcbcb;border-radius:1px"></div>
<div class="t" style="left:42px;top:343.11px;font-size:5.98px;line-height:6.58px;color:#a0a0a0;transform:scaleX(0.87);transform-origin:0 50%;">Search Content</div>
<svg class="a" style="left:618px;top:343px;" width="7" height="7" viewBox="0 0 7 7"><circle cx="4" cy="3" r="2.2" stroke="#111" stroke-width="1.1" fill="none"/><line x1="2.5" y1="4.5" x2="0.5" y2="6.5" stroke="#111" stroke-width="1.2"/></svg>
<svg class="a" style="left:627px;top:343px;" width="6" height="6" viewBox="0 0 6 6"><rect x="0.5" y="0.5" width="5" height="5" fill="none" stroke="#888" stroke-width=".7"/></svg>
<svg class="a" style="left:628px;top:329px;" width="7" height="8" viewBox="0 0 7 8"><rect x="1" y="4" width="5" height="4" fill="#ddd"/><path d="M1.5 4V2.5a1.5 1.5 0 0 1 3 0" stroke="#ddd" fill="none" stroke-width=".8"/></svg>
<svg class="a" style="left:5px;top:355px;" width="23" height="17" viewBox="0 0 23 17"><defs><linearGradient id="fg" x1="0" y1="0" x2="0" y2="1"><stop offset="0" stop-color="#c8c8c8"/><stop offset="1" stop-color="#7c7c7c"/></linearGradient></defs><path d="M1 1.5h7l1.5 1.5H22v14H1z" fill="#a8a8a8"/><rect x="0.5" y="3" width="22" height="14" fill="url(#fg)"/></svg>
<div class="t" style="left:-43.5px;width:120px;text-align:center;top:383.15px;font-size:5.17px;line-height:5.69px;color:#a6a6a6;transform:scaleX(0.87);transform-origin:50% 50%;">Geometry</div>
<svg class="a" style="left:33px;top:355px;" width="23" height="17" viewBox="0 0 23 17"><defs><linearGradient id="fg" x1="0" y1="0" x2="0" y2="1"><stop offset="0" stop-color="#c8c8c8"/><stop offset="1" stop-color="#7c7c7c"/></linearGradient></defs><path d="M1 1.5h7l1.5 1.5H22v14H1z" fill="#a8a8a8"/><rect x="0.5" y="3" width="22" height="14" fill="url(#fg)"/></svg>
<div class="t" style="left:-15.5px;width:120px;text-align:center;top:383.15px;font-size:5.17px;line-height:5.69px;color:#a6a6a6;transform:scaleX(0.87);transform-origin:50% 50%;">Mannequin</div>
<svg class="a" style="left:62px;top:355px;" width="23" height="17" viewBox="0 0 23 17"><defs><linearGradient id="fg" x1="0" y1="0" x2="0" y2="1"><stop offset="0" stop-color="#c8c8c8"/><stop offset="1" stop-color="#7c7c7c"/></linearGradient></defs><path d="M1 1.5h7l1.5 1.5H22v14H1z" fill="#a8a8a8"/><rect x="0.5" y="3" width="22" height="14" fill="url(#fg)"/></svg>
<div class="t" style="left:13.5px;width:120px;text-align:center;top:383.15px;font-size:5.17px;line-height:5.69px;color:#a6a6a6;transform:scaleX(0.87);transform-origin:50% 50%;">ThirdPerson</div>
<svg class="a" style="left:90px;top:355px;" width="23" height="17" viewBox="0 0 23 17"><defs><linearGradient id="fg" x1="0" y1="0" x2="0" y2="1"><stop offset="0" stop-color="#c8c8c8"/><stop offset="1" stop-color="#7c7c7c"/></linearGradient></defs><path d="M1 1.5h7l1.5 1.5H22v14H1z" fill="#a8a8a8"/><rect x="0.5" y="3" width="22" height="14" fill="url(#fg)"/></svg>
<div class="t" style="left:76px;width:51px;text-align:center;top:381.4px;font-size:4.8px;line-height:5px;color:#a6a6a6">ThirdPerson<br>BP</div>
<div class="a" style="left:314px;top:350px;width:29px;height:43px;background:#7a7a7a;"></div>
<svg class="a" style="left:117px;top:352px;" width="25" height="25" viewBox="0 0 25 25"><defs><linearGradient id="tbg" x1="0" y1="0" x2="0" y2="1"><stop offset="0" stop-color="#b4b8bc"/><stop offset=".12" stop-color="#a8aeb4"/><stop offset=".22" stop-color="#8e969c"/><stop offset="1" stop-color="#9aa0a6"/></linearGradient></defs><rect width="25" height="25" fill="url(#tbg)"/><rect x="5" y="4" width="14" height="18" fill="#5c6066"/><rect x="5" y="4" width="7" height="9" fill="#6a6e74"/><rect x="12" y="13" width="7" height="9" fill="#6a6e74"/><rect x="18" y="4" width="2" height="18" fill="#a4a8ac"/><polygon points="1,17 5,14 5,20" fill="#4a5468"/><rect y="23" width="25" height="2" fill="#1ec8dc"/></svg>
<div class="t" style="left:105px;width:49px;text-align:center;top:381.4px;font-size:4.6px;line-height:5px;color:#a6a6a6">Corner_<br>Component</div>
<svg class="a" style="left:146px;top:352px;" width="25" height="25" viewBox="0 0 25 25"><defs><linearGradient id="tbg" x1="0" y1="0" x2="0" y2="1"><stop offset="0" stop-color="#b4b8bc"/><stop offset=".12" stop-color="#a8aeb4"/><stop offset=".22" stop-color="#8e969c"/><stop offset="1" stop-color="#9aa0a6"/></linearGradient></defs><rect width="25" height="25" fill="url(#tbg)"/><rect x="5" y="4" width="14" height="18" fill="#5c6066"/><rect x="5" y="4" width="7" height="9" fill="#6a6e74"/><rect x="12" y="13" width="7" height="9" fill="#6a6e74"/><rect x="18" y="4" width="2" height="18" fill="#a4a8ac"/><polygon points="1,17 5,14 5,20" fill="#4a5468"/><rect y="23" width="25" height="2" fill="#1ec8dc"/></svg>
<div class="t" style="left:134px;width:49px;text-align:center;top:381.4px;font-size:4.6px;line-height:5px;color:#a6a6a6">Corner_<br>Component_<br>No Wall Text</div>
<svg class="a" style="left:174px;top:352px;" width="25" height="25" viewBox="0 0 25 25"><defs><linearGradient id="tbg" x1="0" y1="0" x2="0" y2="1"><stop offset="0" stop-color="#b4b8bc"/><stop offset=".12" stop-color="#a8aeb4"/><stop offset=".22" stop-color="#8e969c"/><stop offset="1" stop-color="#9aa0a6"/></linearGradient></defs><rect width="25" height="25" fill="url(#tbg)"/><rect x="5" y="4" width="14" height="18" fill="#5c6066"/><rect x="5" y="4" width="7" height="9" fill="#6a6e74"/><rect x="12" y="13" width="7" height="9" fill="#6a6e74"/><rect x="18" y="4" width="2" height="18" fill="#a4a8ac"/><polygon points="1,17 5,14 5,20" fill="#4a5468"/><rect y="23" width="25" height="2" fill="#1ec8dc"/></svg>
<div class="t" style="left:162px;width:49px;text-align:center;top:381.4px;font-size:4.6px;line-height:5px;color:#a6a6a6">Corner_With_<br>Barred_<br>Window</div>
<svg class="a" style="left:203px;top:352px;" width="25" height="25" viewBox="0 0 25 25"><defs><linearGradient id="tbg" x1="0" y1="0" x2="0" y2="1"><stop offset="0" stop-color="#b4b8bc"/><stop offset=".12" stop-color="#a8aeb4"/><stop offset=".22" stop-color="#8e969c"/><stop offset="1" stop-color="#9aa0a6"/></linearGradient></defs><rect width="25" height="25" fill="url(#tbg)"/><rect x="5" y="4" width="14" height="18" fill="#5c6066"/><rect x="5" y="4" width="7" height="9" fill="#6a6e74"/><rect x="12" y="13" width="7" height="9" fill="#6a6e74"/><rect x="18" y="4" width="2" height="18" fill="#a4a8ac"/><polygon points="1,17 5,14 5,20" fill="#4a5468"/><rect y="23" width="25" height="2" fill="#1ec8dc"/></svg>
<div class="t" style="left:191px;width:49px;text-align:center;top:381.4px;font-size:4.6px;line-height:5px;color:#a6a6a6">Corner_With_<br>Doorway</div>
<svg class="a" style="left:231px;top:352px;" width="25" height="25" viewBox="0 0 25 25"><defs><linearGradient id="tbg" x1="0" y1="0" x2="0" y2="1"><stop offset="0" stop-color="#b4b8bc"/><stop offset=".12" stop-color="#a8aeb4"/><stop offset=".22" stop-color="#8e969c"/><stop offset="1" stop-color="#9aa0a6"/></linearGradient></defs><rect width="25" height="25" fill="url(#tbg)"/><rect x="9" y="4" width="9" height="19" fill="#a8acb0" opacity=".7"/><path d="M11 4v19M14 4v19M17 4v19" stroke="#c8ccd0" stroke-width=".5"/><polygon points="3,17 9,14 9,20" fill="#6a7078"/><rect y="23" width="25" height="2" fill="#1ec8dc"/></svg>
<div class="t" style="left:219px;width:49px;text-align:center;top:381.4px;font-size:4.6px;line-height:5px;color:#a6a6a6">Prison_Door_<br>08</div>
<svg class="a" style="left:259px;top:352px;" width="25" height="25" viewBox="0 0 25 25"><defs><linearGradient id="tbg" x1="0" y1="0" x2="0" y2="1"><stop offset="0" stop-color="#b4b8bc"/><stop offset=".12" stop-color="#a8aeb4"/><stop offset=".22" stop-color="#8e969c"/><stop offset="1" stop-color="#9aa0a6"/></linearGradient></defs><rect width="25" height="25" fill="url(#tbg)"/><rect x="9" y="4" width="9" height="19" fill="#a8acb0" opacity=".7"/><path d="M11 4v19M14 4v19M17 4v19" stroke="#c8ccd0" stroke-width=".5"/><polygon points="3,17 9,14 9,20" fill="#6a7078"/><rect y="23" width="25" height="2" fill="#1ec8dc"/></svg>
<div class="t" style="left:247px;width:49px;text-align:center;top:381.4px;font-size:4.6px;line-height:5px;color:#a6a6a6">Prison_Door_<br>09</div>
<svg class="a" style="left:288px;top:352px;" width="25" height="25" viewBox="0 0 25 25"><defs><linearGradient id="tbg" x1="0" y1="0" x2="0" y2="1"><stop offset="0" stop-color="#b4b8bc"/><stop offset=".12" stop-color="#a8aeb4"/><stop offset=".22" stop-color="#8e969c"/><stop offset="1" stop-color="#9aa0a6"/></linearGradient></defs><rect width="25" height="25" fill="url(#tbg)"/><rect x="15" y="5" width="2" height="15" fill="#7c8084"/><rect x="8" y="5" width="9" height="1.2" fill="#70747a"/><polygon points="3,17 9,14 15,16 8,18" fill="#50545c"/><polygon points="6,19 14,16 21,18 13,21" fill="#e8ecf0"/><rect y="23" width="25" height="2" fill="#1ec8dc"/></svg>
<div class="t" style="left:276px;width:49px;text-align:center;top:381.4px;font-size:4.6px;line-height:5px;color:#a6a6a6">Wall_<br>Component</div>
<svg class="a" style="left:316px;top:352px;" width="25" height="25" viewBox="0 0 25 25"><defs><linearGradient id="tbg" x1="0" y1="0" x2="0" y2="1"><stop offset="0" stop-color="#b4b8bc"/><stop offset=".12" stop-color="#a8aeb4"/><stop offset=".22" stop-color="#8e969c"/><stop offset="1" stop-color="#9aa0a6"/></linearGradient></defs><rect width="25" height="25" fill="url(#tbg)"/><rect x="8" y="7" width="2" height="11" fill="#2a3450"/><rect x="11" y="7" width="2" height="11" fill="#4a5a80"/><rect x="14" y="7" width="1.2" height="11" fill="#70747a"/><rect x="6" y="6" width="15" height="1.2" fill="#70747a"/><polygon points="4,18 12,16 22,18 14,21" fill="#e8ecf0"/><rect y="23" width="25" height="2" fill="#1ec8dc"/></svg>
<div class="t" style="left:304px;width:49px;text-align:center;top:381.4px;font-size:4.6px;line-height:5px;color:#d8d8d8">Wall_With_<br>Bars_And_<br>Corridor</div>
<svg class="a" style="left:345px;top:352px;" width="25" height="25" viewBox="0 0 25 25"><defs><linearGradient id="tbg" x1="0" y1="0" x2="0" y2="1"><stop offset="0" stop-color="#b4b8bc"/><stop offset=".12" stop-color="#a8aeb4"/><stop offset=".22" stop-color="#8e969c"/><stop offset="1" stop-color="#9aa0a6"/></linearGradient></defs><rect width="25" height="25" fill="url(#tbg)"/><rect x="15" y="5" width="2" height="15" fill="#7c8084"/><rect x="8" y="5" width="9" height="1.2" fill="#70747a"/><polygon points="3,17 9,14 15,16 8,18" fill="#50545c"/><polygon points="6,19 14,16 21,18 13,21" fill="#e8ecf0"/><rect y="23" width="25" height="2" fill="#1ec8dc"/></svg>
<div class="t" style="left:333px;width:49px;text-align:center;top:381.4px;font-size:4.6px;line-height:5px;color:#a6a6a6">Wall_With_<br>Door</div>
<svg class="a" style="left:373px;top:352px;" width="25" height="25" viewBox="0 0 25 25"><defs><linearGradient id="tbg" x1="0" y1="0" x2="0" y2="1"><stop offset="0" stop-color="#b4b8bc"/><stop offset=".12" stop-color="#a8aeb4"/><stop offset=".22" stop-color="#8e969c"/><stop offset="1" stop-color="#9aa0a6"/></linearGradient></defs><rect width="25" height="25" fill="url(#tbg)"/><rect x="4" y="7" width="8" height="12" fill="#50545a"/><rect x="16" y="5" width="1.5" height="14" fill="#80848a"/><rect x="8" y="5" width="10" height="1.2" fill="#70747a"/><polygon points="10,19 22,17 23,20 11,21" fill="#e8ecf0"/><rect y="23" width="25" height="2" fill="#1ec8dc"/></svg>
<div class="t" style="left:361px;width:49px;text-align:center;top:381.4px;font-size:4.6px;line-height:5px;color:#a6a6a6">Wall_With_<br>Door_And_<br>Corridor</div>
<div class="t" style="left:5px;top:407.30px;font-size:5.63px;line-height:6.20px;color:#c4c4c4;transform:scaleX(0.87);transform-origin:0 50%;">14 items (1 selected)</div>
<svg class="a" style="left:591px;top:408px;" width="7" height="5" viewBox="0 0 7 5"><ellipse cx="3.5" cy="2.5" rx="3.3" ry="2" fill="#a8c0e0"/><circle cx="3.5" cy="2.5" r="1" fill="#2a3a5a"/></svg>
<div class="t" style="left:599px;top:408.00px;font-size:5.63px;line-height:6.20px;color:#cfcfcf;transform:scaleX(0.87);transform-origin:0 50%;letter-spacing:-0.15px;">View Options</div>
<svg class="a" style="left:630px;top:409px;" width="4" height="3" viewBox="0 0 4 3"><polygon points="0,0 4,0 2,2.5" fill="#ccc"/></svg>
<div class="a" style="left:0px;top:417px;width:770px;height:16px;background:#05090d;"></div>
<svg class="a" style="left:5px;top:421px;" width="8" height="8" viewBox="0 0 8 8"><g fill="#f0f0f0"><polygon points="0,1.2 3.6,.7 3.6,3.7 0,3.7"/><polygon points="4.2,.6 8,0 8,3.7 4.2,3.7"/><polygon points="0,4.3 3.6,4.3 3.6,7.3 0,6.8"/><polygon points="4.2,4.3 8,4.3 8,8 4.2,7.4"/></g></svg>
<svg class="a" style="left:27px;top:421px;" width="7" height="7" viewBox="0 0 7 7"><circle cx="4.2" cy="2.8" r="2.2" stroke="#eee" stroke-width=".8" fill="none"/><line x1="2.6" y1="4.4" x2=".5" y2="6.5" stroke="#eee" stroke-width=".9"/></svg>
<svg class="a" style="left:44px;top:421px;" width="10" height="7" viewBox="0 0 10 7"><rect x="1.5" y="1" width="7" height="5" fill="none" stroke="#eee" stroke-width=".8"/><path d="M0 2v3M10 2v3" stroke="#eee" stroke-width=".6"/></svg>
<svg class="a" style="left:64px;top:420px;" width="9" height="9" viewBox="0 0 9 9"><rect x="1" y="1" width="7" height="4" fill="none" stroke="#ddd" stroke-width=".7"/><path d="M0 6.5h9M1 8h7" stroke="#ddd" stroke-width=".7"/></svg>
<div class="a" style="left:79px;top:416px;width:19px;height:17px;background:#333639;"></div>
<svg class="a" style="left:83px;top:419px;" width="11" height="11" viewBox="0 0 11 11"><circle cx="5.5" cy="5.5" r="5" fill="#111" stroke="#eee" stroke-width=".8"/><path d="M3.5 3v3.5a2 2 0 0 0 4 0V3" stroke="#eee" stroke-width="1" fill="none"/></svg>
<svg class="a" style="left:103px;top:419px;" width="11" height="11" viewBox="0 0 11 11"><circle cx="5.5" cy="5.5" r="5.2" fill="#e0402a"/><path d="M5.5 5.5L.8 8A5.2 5.2 0 0 0 8.5 9.8z" fill="#30a040"/><path d="M5.5 5.5L8.5 9.8A5.2 5.2 0 0 0 10.5 3.5H5.5z" fill="#f4c020"/><circle cx="5.5" cy="5.5" r="2.2" fill="#fff"/><circle cx="5.5" cy="5.5" r="1.6" fill="#3a78e0"/></svg>
<svg class="a" style="left:122px;top:419px;" width="10" height="10" viewBox="0 0 10 10"><rect x=".5" y=".5" width="9" height="9" fill="#0a1a30" stroke="#30a8f0" stroke-width="1"/><text x="2" y="7" font-size="5" fill="#30a8f0" font-family="Liberation Sans" font-weight="bold">Ps</text></svg>
<svg class="a" style="left:142px;top:419px;" width="10" height="10" viewBox="0 0 10 10"><path d="M0 1h4l1 1h5v8H0z" fill="#e8b830"/><rect x="0" y="3" width="10" height="7" fill="#f4d060"/><rect x="2" y="5" width="6" height="3" fill="#58a8e0"/></svg>
<div class="a" style="left:60px;top:431.5px;width:17px;height:1.5px;background:#8ac0ec;"></div>
<div class="a" style="left:79px;top:431.5px;width:19px;height:1.5px;background:#8ac0ec;"></div>
<div class="a" style="left:100px;top:431.5px;width:16px;height:1.5px;background:#8ac0ec;"></div>
<div class="a" style="left:119px;top:431.5px;width:17px;height:1.5px;background:#8ac0ec;"></div>
<div class="a" style="left:139px;top:431.5px;width:17px;height:1.5px;background:#8ac0ec;"></div>
<svg class="a" style="left:679px;top:422px;" width="6" height="4" viewBox="0 0 6 4"><path d="M.5 3.5L3 1l2.5 2.5" stroke="#eee" stroke-width=".8" fill="none"/></svg>
<svg class="a" style="left:689px;top:420px;" width="9" height="8" viewBox="0 0 9 8"><rect x="2" y="1" width="7" height="5" fill="none" stroke="#eee" stroke-width=".8"/><path d="M0 7h4M5 6v2" stroke="#eee" stroke-width=".8"/></svg>
<svg class="a" style="left:699px;top:421px;" width="8" height="7" viewBox="0 0 8 7"><polygon points="0,2.5 1.8,2.5 3.6,.8 3.6,6.2 1.8,4.5 0,4.5" fill="#eee"/><path d="M4.8 2.2l2.4 2.6M7.2 2.2l-2.4 2.6" stroke="#eee" stroke-width=".6"/></svg>
<div class="t" style="left:709.5px;top:422.88px;font-size:4.94px;line-height:5.44px;color:#eeeeee;transform:scaleX(0.87);transform-origin:0 50%;">ENG</div>
<div class="t" style="left:674.5px;width:120px;text-align:center;top:418.09px;font-size:5.29px;line-height:5.82px;color:#eeeeee;transform:scaleX(0.87);transform-origin:50% 50%;">15:32</div>
<div class="t" style="left:675px;width:120px;text-align:center;top:425.89px;font-size:5.29px;line-height:5.82px;color:#eeeeee;transform:scaleX(0.87);transform-origin:50% 50%;">04/12/2018</div>
<svg class="a" style="left:753px;top:421px;" width="11" height="10" viewBox="0 0 11 10"><path d="M.5 .5h8v5.5h-5l-2 2v-2h-1z" fill="#ddd"/><circle cx="7.5" cy="7" r="2.3" fill="#222" stroke="#ccc" stroke-width=".5"/></svg>
</body></html>
